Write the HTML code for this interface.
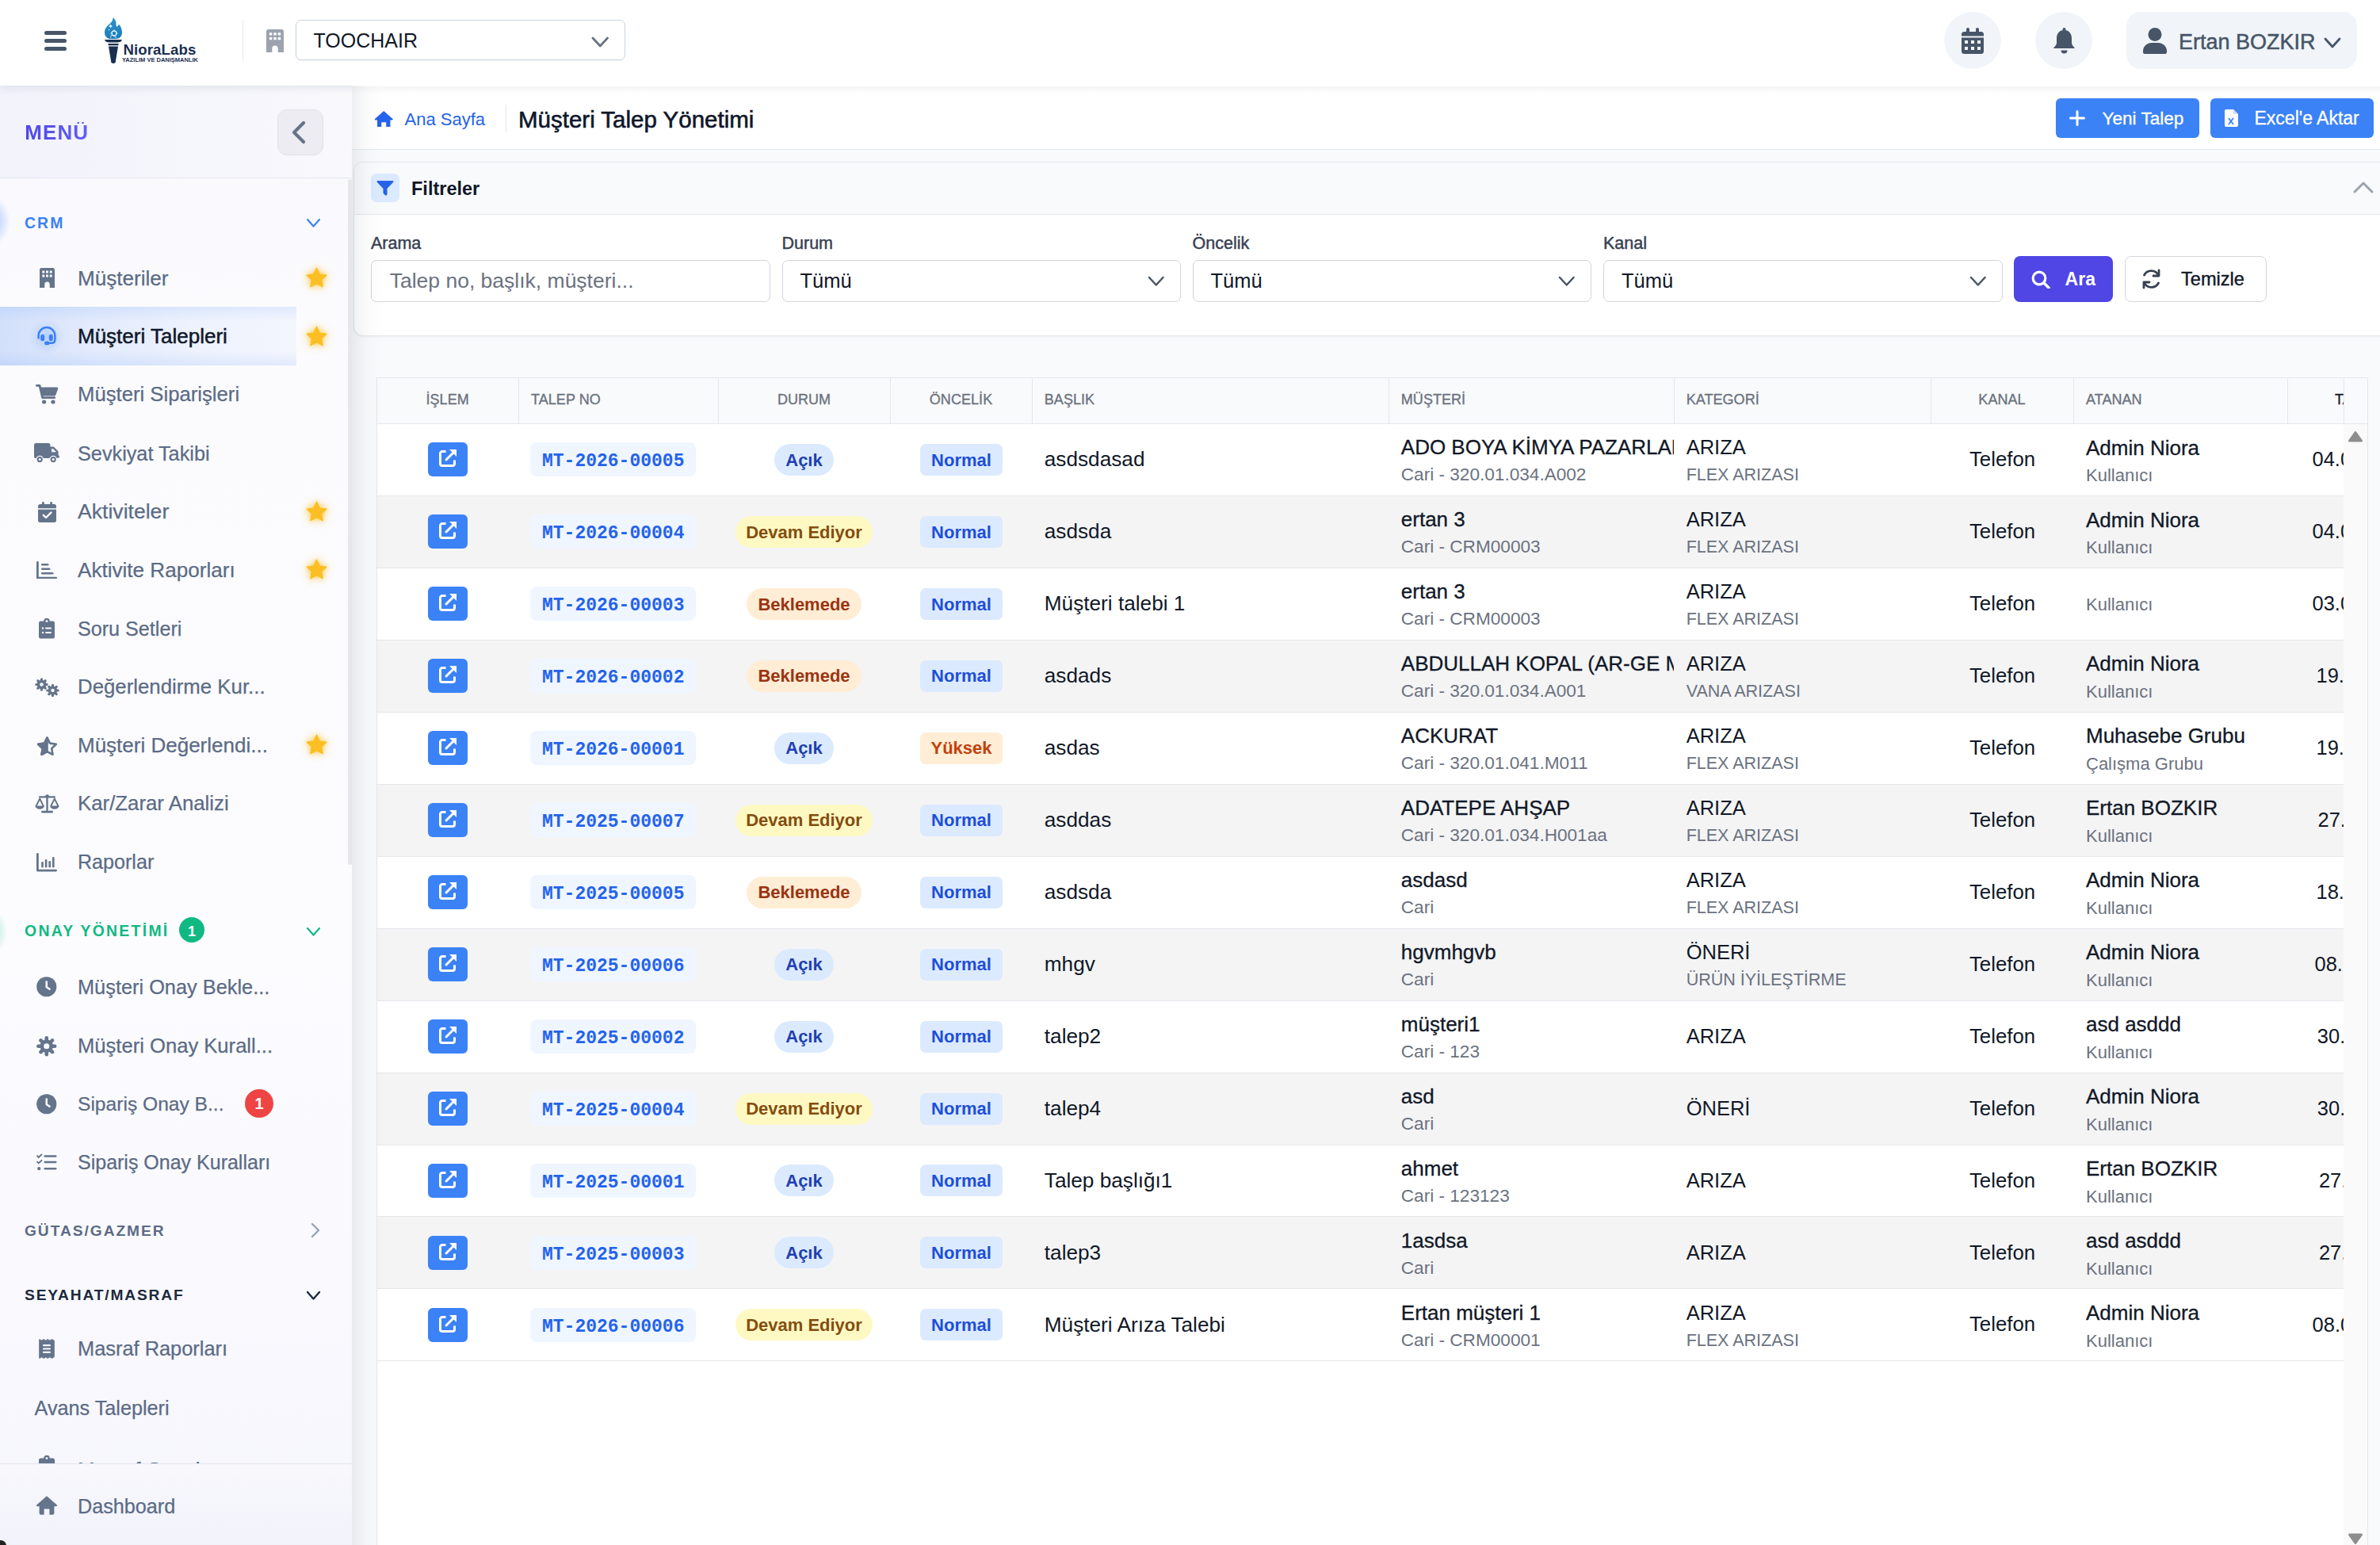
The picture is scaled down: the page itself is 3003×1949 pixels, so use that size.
<!DOCTYPE html><html><head><meta charset="utf-8"><style>
html,body{margin:0;padding:0;}
body{width:3003px;height:1949px;overflow:hidden;position:relative;background:#f8fafc;font-family:'Liberation Sans',sans-serif;}
.a{position:absolute;box-sizing:border-box;}
.t{position:absolute;line-height:1;white-space:nowrap;}
</style></head><body>
<div class="a" style="left:0px;top:108px;width:444px;height:1841px;background:linear-gradient(180deg,#f8f8fd 0%,#fbfbfe 15%,#fcfcff 60%,#f6f6fd 100%);"></div>
<div class="a" style="left:0px;top:108px;width:444px;height:116px;background:linear-gradient(90deg,#f2f2fb 0%,#f5f5fc 50%,#f8f8fd 100%);"></div>
<div class="a" style="left:0px;top:224px;width:444px;height:1px;background:#e6e8f0;"></div>
<div class="t" style="left:31.3px;top:153.9px;font-size:26px;color:#5650e6;font-weight:bold;font-family:'Liberation Sans', sans-serif;letter-spacing:1.1px;background:linear-gradient(90deg,#4f46e5,#6461f0);-webkit-background-clip:text;background-clip:text;color:transparent;">MENÜ</div>
<div class="a" style="left:350px;top:138px;width:58px;height:58px;background:#ececf2;border:1px solid #e1e2ea;border-radius:12px;"></div>
<svg class="a" style="left:366px;top:151px;" width="24" height="32" viewBox="0 0 24 32"><path d="M17 4 L5 16 L17 28" fill="none" stroke="#64748b" stroke-width="4.2" stroke-linecap="round" stroke-linejoin="round"/></svg>
<div class="a" style="left:439px;top:226px;width:5px;height:865px;background:#e5e7eb;border-radius:3px;"></div>
<div class="a" style="left:-16px;top:245px;width:30px;height:68px;background:radial-gradient(ellipse at left center, rgba(90,145,245,0.6), rgba(90,145,245,0) 70%);"></div>
<div class="a" style="left:-14px;top:1145px;width:24px;height:60px;background:radial-gradient(ellipse at left center, rgba(52,200,140,0.45), rgba(52,200,140,0) 70%);"></div>
<div class="t" style="left:31.0px;top:271.5px;font-size:19.4px;color:#3b82f6;font-weight:bold;font-family:'Liberation Sans', sans-serif;letter-spacing:2.1px;">CRM</div>
<svg class="a" style="left:385.5px;top:275px;" width="19" height="12.5" viewBox="-2 -2 19 12.5"><path d="M0 0 L7.5 8.5 L15 0" fill="none" stroke="#3b82f6" stroke-width="2.2" stroke-linecap="round" stroke-linejoin="round"/></svg>
<div class="a" style="left:0px;top:387px;width:374px;height:74px;background:linear-gradient(90deg,#d2e0fb 0%,#e2eafc 30%,#edf2fd 65%,#f4f6fe 100%);"></div>
<div class="a" style="left:0px;top:387px;width:374px;height:74px;background:linear-gradient(180deg,rgba(59,130,246,0.10) 0%,rgba(59,130,246,0) 25%,rgba(59,130,246,0) 75%,rgba(59,130,246,0.10) 100%);"></div>
<svg class="a" style="left:50px;top:338px;" width="19.0" height="25.0" viewBox="0 0 19 25"><path d="M2.5 0h14A2.5 2.5 0 0 1 19 2.5V25h-6.3v-4.2a3.2 3.2 0 0 0-6.4 0V25H0V2.5A2.5 2.5 0 0 1 2.5 0z" fill="#64748b"/><g fill="#f9f9fe"><rect x="3.3" y="3.6" width="3" height="2.8" rx=".5"/><rect x="8" y="3.6" width="3" height="2.8" rx=".5"/><rect x="12.7" y="3.6" width="3" height="2.8" rx=".5"/><rect x="3.3" y="8.6" width="3" height="2.8" rx=".5"/><rect x="8" y="8.6" width="3" height="2.8" rx=".5"/><rect x="12.7" y="8.6" width="3" height="2.8" rx=".5"/></g></svg>
<div class="t" style="left:98.0px;top:337.8px;font-size:26.1px;color:#5b6b85;font-weight:normal;font-family:'Liberation Sans', sans-serif;-webkit-text-stroke:0.25px #5b6b85;">Müşteriler</div>
<svg class="a" style="left:378.5px;top:330.0px;filter:drop-shadow(0 0 3px rgba(251,191,36,0.8)) drop-shadow(0 0 7px rgba(251,191,36,0.4));" width="41" height="41" viewBox="-6 -6 36 36"><path d="M12 1.2l3.3 6.9 7.5 1-5.5 5.2 1.4 7.5L12 18.2l-6.7 3.6 1.4-7.5L1.2 9.1l7.5-1z" fill="#fbbf24" stroke="#fbbf24" stroke-width="1.2" stroke-linejoin="round"/></svg>
<div class="a" style="left:34px;top:400.5px;width:50px;height:48px;background:radial-gradient(circle, rgba(59,130,246,0.22), rgba(59,130,246,0) 65%);"></div>
<svg class="a" style="left:46px;top:411.0px;" width="26.0" height="25.0" viewBox="0 0 26 25"><path d="M2.6 15.5V12.5A10.4 10.4 0 0 1 23.4 12.5V17.5Q23.4 21.8 18.5 21.8H15" fill="none" stroke="#3b82f6" stroke-width="2.5" stroke-linecap="round"/><rect x="5.2" y="10.8" width="5" height="8.4" rx="2.5" fill="#3b82f6"/><rect x="15.8" y="10.8" width="5" height="8.4" rx="2.5" fill="#3b82f6"/><rect x="10" y="19.6" width="6.5" height="4.6" rx="2.3" fill="#3b82f6"/></svg>
<div class="t" style="left:98.0px;top:411.4px;font-size:26px;color:#0f172a;font-weight:normal;font-family:'Liberation Sans', sans-serif;-webkit-text-stroke:0.5px #0f172a;">Müşteri Talepleri</div>
<svg class="a" style="left:378.5px;top:403.5px;filter:drop-shadow(0 0 3px rgba(251,191,36,0.8)) drop-shadow(0 0 7px rgba(251,191,36,0.4));" width="41" height="41" viewBox="-6 -6 36 36"><path d="M12 1.2l3.3 6.9 7.5 1-5.5 5.2 1.4 7.5L12 18.2l-6.7 3.6 1.4-7.5L1.2 9.1l7.5-1z" fill="#fbbf24" stroke="#fbbf24" stroke-width="1.2" stroke-linejoin="round"/></svg>
<svg class="a" style="left:45px;top:485.4px;" width="28.5" height="25.0" viewBox="0 0 28.5 25"><path d="M1.4 1.4H5L8.6 16.6H23.8" fill="none" stroke="#64748b" stroke-width="2.8" stroke-linecap="round" stroke-linejoin="round"/><path d="M6.2 3.6H26.8A1.4 1.4 0 0 1 28.1 5.4L25.3 13.6A1.6 1.6 0 0 1 23.8 14.6H8.4z" fill="#64748b"/><circle cx="10.6" cy="22" r="2.6" fill="#64748b"/><circle cx="22" cy="22" r="2.6" fill="#64748b"/></svg>
<div class="t" style="left:98.0px;top:485.2px;font-size:25.7px;color:#5b6b85;font-weight:normal;font-family:'Liberation Sans', sans-serif;-webkit-text-stroke:0.25px #5b6b85;">Müşteri Siparişleri</div>
<svg class="a" style="left:42.7px;top:559px;" width="32.0" height="25.0" viewBox="0 0 32 25"><rect x="0" y="0" width="20.5" height="19" rx="2.6" fill="#64748b"/><path d="M19.5 4.6H24.6L30.6 10.4V17A2 2 0 0 1 28.6 19H19.5z" fill="#64748b"/><path d="M22 7.2H24L28 11.2H22z" fill="#f9f9fe"/><circle cx="7.2" cy="20.6" r="4.8" fill="#f9f9fe"/><circle cx="24.2" cy="20.6" r="4.8" fill="#f9f9fe"/><circle cx="7.2" cy="20.6" r="3.6" fill="#64748b"/><circle cx="24.2" cy="20.6" r="3.6" fill="#64748b"/><circle cx="7.2" cy="20.6" r="1.5" fill="#f9f9fe"/><circle cx="24.2" cy="20.6" r="1.5" fill="#f9f9fe"/><rect x="29" y="15.5" width="3" height="3" rx="1.2" fill="#64748b"/></svg>
<div class="t" style="left:98.0px;top:559.5px;font-size:25.25px;color:#5b6b85;font-weight:normal;font-family:'Liberation Sans', sans-serif;-webkit-text-stroke:0.25px #5b6b85;">Sevkiyat Takibi</div>
<svg class="a" style="left:48px;top:632.5px;" width="23.0" height="26.0" viewBox="0 0 23 26"><rect x="0" y="3" width="23" height="23" rx="2.8" fill="#64748b"/><rect x="5" y="0" width="2.8" height="6" rx="1.4" fill="#64748b"/><rect x="15.2" y="0" width="2.8" height="6" rx="1.4" fill="#64748b"/><rect x="0" y="8.2" width="23" height="1.5" fill="#f9f9fe"/><path d="M6.8 16.8L10 20L16.4 13.6" fill="none" stroke="#f9f9fe" stroke-width="2.4" stroke-linecap="round" stroke-linejoin="round"/></svg>
<div class="t" style="left:98.0px;top:631.9px;font-size:26.6px;color:#5b6b85;font-weight:normal;font-family:'Liberation Sans', sans-serif;-webkit-text-stroke:0.25px #5b6b85;">Aktiviteler</div>
<svg class="a" style="left:378.5px;top:624.5px;filter:drop-shadow(0 0 3px rgba(251,191,36,0.8)) drop-shadow(0 0 7px rgba(251,191,36,0.4));" width="41" height="41" viewBox="-6 -6 36 36"><path d="M12 1.2l3.3 6.9 7.5 1-5.5 5.2 1.4 7.5L12 18.2l-6.7 3.6 1.4-7.5L1.2 9.1l7.5-1z" fill="#fbbf24" stroke="#fbbf24" stroke-width="1.2" stroke-linejoin="round"/></svg>
<svg class="a" style="left:46px;top:707.7px;" width="26.0" height="22.5" viewBox="0 0 26 22.5"><path d="M1.4 1.4V21.1H24.6" fill="none" stroke="#64748b" stroke-width="2.8" stroke-linecap="round" stroke-linejoin="round"/><rect x="6" y="3" width="9.5" height="2.6" rx="1.3" fill="#64748b"/><rect x="6" y="8.5" width="11.5" height="2.6" rx="1.3" fill="#64748b"/><rect x="6" y="14" width="15.5" height="2.6" rx="1.3" fill="#64748b"/></svg>
<div class="t" style="left:98.0px;top:705.8px;font-size:26.1px;color:#5b6b85;font-weight:normal;font-family:'Liberation Sans', sans-serif;-webkit-text-stroke:0.25px #5b6b85;">Aktivite Raporları</div>
<svg class="a" style="left:378.5px;top:698.0px;filter:drop-shadow(0 0 3px rgba(251,191,36,0.8)) drop-shadow(0 0 7px rgba(251,191,36,0.4));" width="41" height="41" viewBox="-6 -6 36 36"><path d="M12 1.2l3.3 6.9 7.5 1-5.5 5.2 1.4 7.5L12 18.2l-6.7 3.6 1.4-7.5L1.2 9.1l7.5-1z" fill="#fbbf24" stroke="#fbbf24" stroke-width="1.2" stroke-linejoin="round"/></svg>
<svg class="a" style="left:49px;top:780.2px;" width="20.0" height="25.5" viewBox="0 0 20 25.5"><path d="M2.5 3.5H6.2A3.8 3.8 0 0 1 13.8 3.5H17.5A2.5 2.5 0 0 1 20 6V23A2.5 2.5 0 0 1 17.5 25.5H2.5A2.5 2.5 0 0 1 0 23V6A2.5 2.5 0 0 1 2.5 3.5z" fill="#64748b"/><circle cx="10" cy="3.6" r="1.4" fill="#f9f9fe"/><g fill="#f9f9fe"><circle cx="5" cy="12.5" r="1.2"/><rect x="8" y="11.5" width="8" height="2" rx="1"/><circle cx="5" cy="18" r="1.2"/><rect x="8" y="17" width="8" height="2" rx="1"/></g></svg>
<div class="t" style="left:98.0px;top:780.6px;font-size:25.15px;color:#5b6b85;font-weight:normal;font-family:'Liberation Sans', sans-serif;-webkit-text-stroke:0.25px #5b6b85;">Soru Setleri</div>
<svg class="a" style="left:43.6px;top:854.7px;" width="31.0" height="24.0" viewBox="0 0 31 24"><g fill="#64748b"><circle cx="8.5" cy="8.5" r="5.8"/><g stroke="#64748b" stroke-width="3.2" stroke-linecap="round"><path d="M8.5 1.8v13.4M1.8 8.5h13.4M3.8 3.8l9.4 9.4M13.2 3.8l-9.4 9.4"/></g><circle cx="22.5" cy="16" r="5.6"/><g stroke="#64748b" stroke-width="3.1" stroke-linecap="round"><path d="M22.5 9.3v13.4M15.8 16h13.4M17.8 11.3l9.4 9.4M27.2 11.3l-9.4 9.4"/></g></g><circle cx="8.5" cy="8.5" r="2.3" fill="#f9f9fe"/><circle cx="22.5" cy="16" r="2.2" fill="#f9f9fe"/></svg>
<div class="t" style="left:98.0px;top:853.6px;font-size:25.8px;color:#5b6b85;font-weight:normal;font-family:'Liberation Sans', sans-serif;-webkit-text-stroke:0.25px #5b6b85;">Değerlendirme Kur...</div>
<svg class="a" style="left:45.7px;top:929.2px;" width="27.0" height="24.0" viewBox="0 0 27 24"><path d="M13.5 1.6L17 8.6L24.8 9.7L19.2 15.2L20.5 22.9L13.5 19.2L6.5 22.9L7.8 15.2L2.2 9.7L10 8.6z" fill="none" stroke="#64748b" stroke-width="2.6" stroke-linejoin="round"/><path d="M13.5 1.6V19.2L6.5 22.9L7.8 15.2L2.2 9.7L10 8.6z" fill="#64748b" stroke="#64748b" stroke-width="2.6" stroke-linejoin="round"/></svg>
<div class="t" style="left:98.0px;top:926.9px;font-size:26px;color:#5b6b85;font-weight:normal;font-family:'Liberation Sans', sans-serif;-webkit-text-stroke:0.25px #5b6b85;">Müşteri Değerlendi...</div>
<svg class="a" style="left:378.5px;top:919.0px;filter:drop-shadow(0 0 3px rgba(251,191,36,0.8)) drop-shadow(0 0 7px rgba(251,191,36,0.4));" width="41" height="41" viewBox="-6 -6 36 36"><path d="M12 1.2l3.3 6.9 7.5 1-5.5 5.2 1.4 7.5L12 18.2l-6.7 3.6 1.4-7.5L1.2 9.1l7.5-1z" fill="#fbbf24" stroke="#fbbf24" stroke-width="1.2" stroke-linejoin="round"/></svg>
<svg class="a" style="left:43.6px;top:1002.4px;" width="31.0" height="24.0" viewBox="0 0 31 24"><rect x="14.3" y="2.5" width="2.4" height="19" fill="#64748b"/><circle cx="15.5" cy="2.6" r="2.4" fill="#64748b"/><rect x="5" y="2.2" width="21" height="2.4" rx="1.2" fill="#64748b"/><rect x="8" y="20.8" width="15" height="2.6" rx="1.3" fill="#64748b"/><path d="M1.5 15L6.2 5.5L10.9 15" fill="none" stroke="#64748b" stroke-width="1.9" stroke-linejoin="round"/><path d="M0.4 14.6H12A5.8 4.2 0 0 1 0.4 14.6z" fill="#64748b"/><path d="M20.1 15L24.8 5.5L29.5 15" fill="none" stroke="#64748b" stroke-width="1.9" stroke-linejoin="round"/><path d="M19 14.6H30.6A5.8 4.2 0 0 1 19 14.6z" fill="#64748b"/></svg>
<div class="t" style="left:98.0px;top:1001.1px;font-size:25.8px;color:#5b6b85;font-weight:normal;font-family:'Liberation Sans', sans-serif;-webkit-text-stroke:0.25px #5b6b85;">Kar/Zarar Analizi</div>
<svg class="a" style="left:46px;top:1076.3px;" width="26.0" height="23.5" viewBox="0 0 26 23.5"><path d="M1.4 1.4V22.1H24.6" fill="none" stroke="#64748b" stroke-width="2.8" stroke-linecap="round" stroke-linejoin="round"/><rect x="6.2" y="11" width="2.6" height="7.5" rx="1.3" fill="#64748b"/><rect x="10.8" y="8" width="2.6" height="10.5" rx="1.3" fill="#64748b"/><rect x="15.4" y="10" width="2.6" height="8.5" rx="1.3" fill="#64748b"/><rect x="20" y="5" width="2.6" height="13.5" rx="1.3" fill="#64748b"/></svg>
<div class="t" style="left:98.0px;top:1075.2px;font-size:25.1px;color:#5b6b85;font-weight:normal;font-family:'Liberation Sans', sans-serif;-webkit-text-stroke:0.25px #5b6b85;">Raporlar</div>
<div class="t" style="left:31.0px;top:1164.5px;font-size:19.4px;color:#10b981;font-weight:bold;font-family:'Liberation Sans', sans-serif;letter-spacing:2.3px;">ONAY YÖNETİMİ</div>
<div class="a" style="left:226px;top:1157px;width:32px;height:32px;background:#10b981;border-radius:50%;"></div>
<div class="t" style="left:-758.0px;width:2000px;text-align:center;top:1165.7px;font-size:18px;color:#fff;font-weight:bold;font-family:'Liberation Sans', sans-serif;">1</div>
<svg class="a" style="left:385.5px;top:1169px;" width="19" height="12.5" viewBox="-2 -2 19 12.5"><path d="M0 0 L7.5 8.5 L15 0" fill="none" stroke="#10b981" stroke-width="2.2" stroke-linecap="round" stroke-linejoin="round"/></svg>
<svg class="a" style="left:46px;top:1232.2px;" width="25.5" height="25.5" viewBox="0 0 25.5 25.5"><circle cx="12.75" cy="12.75" r="12.6" fill="#64748b"/><path d="M12.75 6.5V13.2L16.6 15.8" fill="none" stroke="#f9f9fe" stroke-width="2.5" stroke-linecap="round" stroke-linejoin="round"/></svg>
<div class="t" style="left:98.0px;top:1232.5px;font-size:25.35px;color:#5b6b85;font-weight:normal;font-family:'Liberation Sans', sans-serif;-webkit-text-stroke:0.25px #5b6b85;">Müşteri Onay Bekle...</div>
<svg class="a" style="left:46px;top:1307.2px;" width="25.5" height="25.5" viewBox="0 0 25.5 25.5"><g fill="#64748b"><circle cx="12.75" cy="12.75" r="8.2"/><g stroke="#64748b" stroke-width="4.6" stroke-linecap="round"><path d="M12.75 2.3v20.9M2.3 12.75h20.9M5.4 5.4l14.7 14.7M20.1 5.4L5.4 20.1"/></g></g><circle cx="12.75" cy="12.75" r="3.6" fill="#f9f9fe"/></svg>
<div class="t" style="left:98.0px;top:1307.2px;font-size:25.6px;color:#5b6b85;font-weight:normal;font-family:'Liberation Sans', sans-serif;-webkit-text-stroke:0.25px #5b6b85;">Müşteri Onay Kurall...</div>
<svg class="a" style="left:46px;top:1380.2px;" width="25.5" height="25.5" viewBox="0 0 25.5 25.5"><circle cx="12.75" cy="12.75" r="12.6" fill="#64748b"/><path d="M12.75 6.5V13.2L16.6 15.8" fill="none" stroke="#f9f9fe" stroke-width="2.5" stroke-linecap="round" stroke-linejoin="round"/></svg>
<div class="t" style="left:98.0px;top:1381.1px;font-size:24.6px;color:#5b6b85;font-weight:normal;font-family:'Liberation Sans', sans-serif;-webkit-text-stroke:0.25px #5b6b85;">Sipariş Onay B...</div>
<svg class="a" style="left:46px;top:1454.5px;" width="25.5" height="22.0" viewBox="0 0 25.5 22"><path d="M1 3.2L2.8 5L6.4 1.4M1 10.6L2.8 12.4L6.4 8.8" fill="none" stroke="#64748b" stroke-width="1.9" stroke-linecap="round" stroke-linejoin="round"/><circle cx="3.2" cy="19.2" r="2.1" fill="#64748b"/><rect x="9.5" y="2.2" width="16" height="2.6" rx="1.2" fill="#64748b"/><rect x="9.5" y="9.7" width="16" height="2.6" rx="1.2" fill="#64748b"/><rect x="9.5" y="17.9" width="16" height="2.6" rx="1.2" fill="#64748b"/></svg>
<div class="t" style="left:98.0px;top:1453.8px;font-size:25.0px;color:#5b6b85;font-weight:normal;font-family:'Liberation Sans', sans-serif;-webkit-text-stroke:0.25px #5b6b85;">Sipariş Onay Kuralları</div>
<div class="a" style="left:309px;top:1374px;width:36px;height:36px;background:#ef4444;border-radius:50%;"></div>
<div class="t" style="left:-673.0px;width:2000px;text-align:center;top:1382.0px;font-size:20px;color:#fff;font-weight:bold;font-family:'Liberation Sans', sans-serif;">1</div>
<div class="t" style="left:31.0px;top:1542.7px;font-size:19.2px;color:#5b6b85;font-weight:bold;font-family:'Liberation Sans', sans-serif;letter-spacing:1.95px;">GÜTAS/GAZMER</div>
<svg class="a" style="left:390px;top:1541px;" width="16" height="22" viewBox="0 0 16 22"><path d="M4 3 L12 11 L4 19" fill="none" stroke="#94a3b8" stroke-width="2.4" stroke-linecap="round" stroke-linejoin="round"/></svg>
<div class="t" style="left:31.0px;top:1623.7px;font-size:19.2px;color:#1e293b;font-weight:bold;font-family:'Liberation Sans', sans-serif;letter-spacing:1.83px;">SEYAHAT/MASRAF</div>
<svg class="a" style="left:385.5px;top:1628px;" width="19" height="12.5" viewBox="-2 -2 19 12.5"><path d="M0 0 L7.5 8.5 L15 0" fill="none" stroke="#1e293b" stroke-width="2.4" stroke-linecap="round" stroke-linejoin="round"/></svg>
<svg class="a" style="left:49px;top:1689px;" width="20.0" height="25.0" viewBox="0 0 20 25"><path d="M0.8 0.8L3.5 2.6L6.2 0.8L8.9 2.6L11.1 0.8L13.8 2.6L16.5 0.8L19.2 2.6V22.4L16.5 24.2L13.8 22.4L11.1 24.2L8.9 22.4L6.2 24.2L3.5 22.4L0.8 24.2z" fill="#64748b" stroke="#64748b" stroke-width="1.2" stroke-linejoin="round"/><g fill="#f9f9fe"><rect x="5" y="7" width="10" height="2.2" rx="1"/><rect x="5" y="11.4" width="10" height="2.2" rx="1"/><rect x="5" y="15.8" width="10" height="2.2" rx="1"/></g></svg>
<div class="t" style="left:98.0px;top:1689.4px;font-size:25.4px;color:#5b6b85;font-weight:normal;font-family:'Liberation Sans', sans-serif;-webkit-text-stroke:0.25px #5b6b85;">Masraf Raporları</div>
<div class="t" style="left:43.6px;top:1763.6px;font-size:25.2px;color:#5b6b85;font-weight:normal;font-family:'Liberation Sans', sans-serif;-webkit-text-stroke:0.25px #5b6b85;">Avans Talepleri</div>
<div class="a" style="left:0;top:1800px;width:444px;height:46px;overflow:hidden;">
<svg class="a" style="left:49px;top:36px;" width="20.0" height="25.5" viewBox="0 0 20 25.5"><path d="M2.5 3.5H6.2A3.8 3.8 0 0 1 13.8 3.5H17.5A2.5 2.5 0 0 1 20 6V23A2.5 2.5 0 0 1 17.5 25.5H2.5A2.5 2.5 0 0 1 0 23V6A2.5 2.5 0 0 1 2.5 3.5z" fill="#64748b"/><circle cx="10" cy="3.6" r="1.4" fill="#f9f9fe"/></svg>
<div class="t" style="left:98.0px;top:40.9px;font-size:26px;color:#5b6b85;font-weight:normal;font-family:'Liberation Sans', sans-serif;-webkit-text-stroke:0.25px #5b6b85;">Masraf Onayları</div>
</div>
<div class="a" style="left:0px;top:1846px;width:444px;height:1px;background:#e2e4ee;"></div>
<div class="a" style="left:0px;top:1847px;width:444px;height:102px;background:linear-gradient(180deg,#f8f8fd,#f2f2fb);"></div>
<svg class="a" style="left:45px;top:1886px;" width="28.0" height="25.0" viewBox="0 0 28 25"><path d="M14 1.2L1.4 12.2A1.1 1.1 0 0 0 2.2 14.2H4.6V23A1.8 1.8 0 0 0 6.4 24.8H10.6V17.5H17.4V24.8H21.6A1.8 1.8 0 0 0 23.4 23V14.2H25.8A1.1 1.1 0 0 0 26.6 12.2z" fill="#64748b"/></svg>
<div class="t" style="left:98.0px;top:1887.6px;font-size:25.2px;color:#5b6b85;font-weight:normal;font-family:'Liberation Sans', sans-serif;-webkit-text-stroke:0.25px #5b6b85;">Dashboard</div>
<div class="a" style="left:0px;top:0px;width:3003px;height:109px;background:#fff;border-bottom:1px solid #e5e7eb;box-shadow:0 3px 10px rgba(15,23,42,0.07);"></div>
<div class="a" style="left:56px;top:39px;width:28px;height:4.5px;background:#475569;border-radius:2.5px;"></div>
<div class="a" style="left:56px;top:49px;width:28px;height:4.5px;background:#475569;border-radius:2.5px;"></div>
<div class="a" style="left:56px;top:59px;width:28px;height:4.5px;background:#475569;border-radius:2.5px;"></div>
<svg class="a" style="left:128px;top:20px;" width="30" height="62" viewBox="0 0 30 62"><defs><linearGradient id="fl" x1="0" y1="0" x2="0" y2="1"><stop offset="0" stop-color="#2a93cc"/><stop offset="1" stop-color="#1b7db8"/></linearGradient></defs><path d="M14.6 2 C17 4 19 7 18.5 11 C18.3 13 19.3 14 20.5 13 C21.3 12.2 21.8 11.5 22 10.5 C24.5 13 26 17 26 21 C26 25.5 23 29 18 29 H10 C6.5 28 4 25 4 21 C4 15.5 8 12 11.5 9 C13.5 7 14.5 5 14.6 2 Z" fill="url(#fl)"/><path d="M11.5 10.5 l1 1.5 1.5 1 -1.5 1 -1 1.5 -1 -1.5 -1.5 -1 1.5 -1z" fill="#e0f2fe"/><circle cx="9.5" cy="17.5" r="0.8" fill="#e0f2fe"/><circle cx="16" cy="22" r="3" fill="none" stroke="#e0f2fe" stroke-width="1.3"/><path d="M16 17.5v2M16 24.5v2M11.5 22h2M18.5 22h2M12 28v-3h2.5M18 28v-2" stroke="#e0f2fe" stroke-width="1"/><path d="M4 30 H26 Q25 33.5 20 33.5 H10 Q5 33.5 4 30 Z" fill="#17304f"/><rect x="8.5" y="35" width="13" height="2.2" rx="0.5" fill="#17304f"/><path d="M9 38.6 H21 L17.6 59 Q15 61 12.4 59 Z" fill="#17304f"/></svg>
<div class="t" style="left:155.5px;top:54.2px;font-size:18.6px;color:#1b2f4f;font-weight:bold;font-family:'Liberation Sans', sans-serif;letter-spacing:0.1px;">NioraLabs</div>
<div class="t" style="left:154.0px;top:72.1px;font-size:7.5px;color:#1b2f4f;font-weight:bold;font-family:'Liberation Sans', sans-serif;">YAZILIM VE DANIŞMANLIK</div>
<div class="a" style="left:305.5px;top:25px;width:1.2px;height:52px;background:#e5e7eb;"></div>
<svg class="a" style="left:336px;top:37px;" width="22.04" height="28.999999999999996" viewBox="0 0 19 25"><path d="M2.5 0h14A2.5 2.5 0 0 1 19 2.5V25h-6.3v-4.2a3.2 3.2 0 0 0-6.4 0V25H0V2.5A2.5 2.5 0 0 1 2.5 0z" fill="#9ca3af"/><g fill="#ffffff"><rect x="3.3" y="3.6" width="3" height="2.8" rx=".5"/><rect x="8" y="3.6" width="3" height="2.8" rx=".5"/><rect x="12.7" y="3.6" width="3" height="2.8" rx=".5"/><rect x="3.3" y="8.6" width="3" height="2.8" rx=".5"/><rect x="8" y="8.6" width="3" height="2.8" rx=".5"/><rect x="12.7" y="8.6" width="3" height="2.8" rx=".5"/></g></svg>
<div class="a" style="left:372.6px;top:25.3px;width:416px;height:51px;background:#fff;border:1.3px solid #cbd5e1;border-radius:7px;box-shadow:0 1px 2px rgba(0,0,0,0.05);"></div>
<div class="t" style="left:395.5px;top:38.8px;font-size:25px;color:#111827;font-weight:normal;font-family:'Liberation Sans', sans-serif;">TOOCHAIR</div>
<svg class="a" style="left:746px;top:46px;" width="22.5" height="14" viewBox="-2 -2 22.5 14"><path d="M0 0 L9.25 10 L18.5 0" fill="none" stroke="#6b7280" stroke-width="2.8" stroke-linecap="round" stroke-linejoin="round"/></svg>
<div class="a" style="left:2453px;top:15px;width:72px;height:72px;background:#f1f5f9;border-radius:50%;"></div>
<svg class="a" style="left:2475px;top:35px;" width="28" height="33" viewBox="0 0 28 33"><rect x="0" y="5" width="28" height="28" rx="3.5" fill="#475569"/><rect x="6" y="0" width="4" height="8" rx="2" fill="#475569"/><rect x="18" y="0" width="4" height="8" rx="2" fill="#475569"/><rect x="0" y="10.5" width="28" height="2" fill="#f1f5f9"/><g fill="#f1f5f9"><rect x="4" y="16" width="4" height="4"/><rect x="12" y="16" width="4" height="4"/><rect x="20" y="16" width="4" height="4"/><rect x="4" y="24" width="4" height="4"/><rect x="12" y="24" width="4" height="4"/><rect x="20" y="24" width="4" height="4"/></g></svg>
<div class="a" style="left:2568px;top:15px;width:72px;height:72px;background:#f1f5f9;border-radius:50%;"></div>
<svg class="a" style="left:2590px;top:35px;" width="29" height="33" viewBox="0 0 29 33"><rect x="12.5" y="0" width="4" height="5" rx="2" fill="#475569"/><path d="M14.5 3 C8 3 5 8 5 13 V19 C5 22 2 24 1 26 H28 C27 24 24 22 24 19 V13 C24 8 21 3 14.5 3z" fill="#475569"/><path d="M10.5 28.5 H18.5 A4 4 0 0 1 10.5 28.5z" fill="#475569"/></svg>
<div class="a" style="left:2683px;top:15px;width:291px;height:72px;background:#f1f5f9;border-radius:18px;"></div>
<svg class="a" style="left:2704px;top:35px;" width="30" height="33" viewBox="0 0 30 33"><circle cx="15" cy="8.5" r="8.5" fill="#475569"/><path d="M2 33 A2 2 0 0 1 0 31 V29.5 C0 23.5 5 19 11 19 H19 C25 19 30 23.5 30 29.5 V31 A2 2 0 0 1 28 33z" fill="#475569"/></svg>
<div class="t" style="left:2749.0px;top:40.0px;font-size:27px;color:#475569;font-weight:normal;font-family:'Liberation Sans', sans-serif;-webkit-text-stroke:0.5px #475569;">Ertan BOZKIR</div>
<svg class="a" style="left:2932px;top:47px;" width="22" height="14" viewBox="-2 -2 22 14"><path d="M0 0 L9.0 10 L18 0" fill="none" stroke="#475569" stroke-width="2.8" stroke-linecap="round" stroke-linejoin="round"/></svg>
<div class="a" style="left:444px;top:108px;width:2559px;height:81px;background:#fff;border-bottom:1px solid #e5e7eb;"></div>
<svg class="a" style="left:472px;top:138.5px;" width="24.5" height="21.875" viewBox="0 0 28 25"><path d="M14 1.2L1.4 12.2A1.1 1.1 0 0 0 2.2 14.2H4.6V23A1.8 1.8 0 0 0 6.4 24.8H10.6V17.5H17.4V24.8H21.6A1.8 1.8 0 0 0 23.4 23V14.2H25.8A1.1 1.1 0 0 0 26.6 12.2z" fill="#2563eb"/></svg>
<div class="t" style="left:510.6px;top:139.8px;font-size:22px;color:#2563eb;font-weight:normal;font-family:'Liberation Sans', sans-serif;">Ana Sayfa</div>
<div class="a" style="left:638px;top:131.5px;width:1.3px;height:35px;background:#e5e7eb;"></div>
<div class="t" style="left:654.0px;top:135.9px;font-size:29.5px;color:#0f172a;font-weight:normal;font-family:'Liberation Sans', sans-serif;-webkit-text-stroke:0.6px #0f172a;">Müşteri Talep Yönetimi</div>
<div class="a" style="left:2594px;top:124px;width:181px;height:50px;background:#3b82f6;border-radius:6px;"></div>
<svg class="a" style="left:2611px;top:139px;" width="20" height="20" viewBox="0 0 20 20"><path d="M10 1.5V18.5M1.5 10H18.5" stroke="#fff" stroke-width="3" stroke-linecap="round"/></svg>
<div class="t" style="left:2652.4px;top:138.8px;font-size:22.6px;color:#fff;font-weight:normal;font-family:'Liberation Sans', sans-serif;-webkit-text-stroke:0.3px #fff;">Yeni Talep</div>
<div class="a" style="left:2789px;top:124px;width:206px;height:50px;background:#3b82f6;border-radius:6px;"></div>
<svg class="a" style="left:2807px;top:138px;" width="17" height="22" viewBox="0 0 17 22"><path d="M2 0 H11 L17 6 V20 A2 2 0 0 1 15 22 H2 A2 2 0 0 1 0 20 V2 A2 2 0 0 1 2 0z" fill="#fff"/><path d="M11 0 V6 H17" fill="#cfe0fd"/><path d="M5 11 L11 19 M11 11 L5 19" stroke="#3b82f6" stroke-width="1.8"/></svg>
<div class="t" style="left:2844.5px;top:138.4px;font-size:23px;color:#fff;font-weight:normal;font-family:'Liberation Sans', sans-serif;-webkit-text-stroke:0.3px #fff;">Excel&#x27;e Aktar</div>
<div class="a" style="left:445.5px;top:204px;width:2600px;height:220px;background:#fff;border:1px solid #e5e7eb;border-radius:12px;box-shadow:0 1px 3px rgba(15,23,42,0.06);overflow:hidden;"></div>
<div class="a" style="left:446.5px;top:205px;width:2600px;height:66px;background:#f8fafc;border-bottom:1px solid #e5e7eb;border-top-left-radius:11px;"></div>
<div class="a" style="left:468px;top:219px;width:36px;height:36px;background:#dbeafe;border-radius:7px;"></div>
<svg class="a" style="left:475px;top:226.5px;" width="22" height="20" viewBox="0 0 22 20"><path d="M1.5 1 H20.5 A1 1 0 0 1 21.2 2.7 L13.5 11 V18 A1.5 1.5 0 0 1 11 19.2 L9.3 17.6 A1.5 1.5 0 0 1 8.5 16.5 V11 L0.8 2.7 A1 1 0 0 1 1.5 1z" fill="#2563eb"/></svg>
<div class="t" style="left:519.0px;top:227.0px;font-size:23.5px;color:#111827;font-weight:bold;font-family:'Liberation Sans', sans-serif;">Filtreler</div>
<svg class="a" style="left:2968px;top:226px;" width="28" height="20" viewBox="0 0 28 20"><path d="M3 16 L14 5 L25 16" fill="none" stroke="#9ca3af" stroke-width="3" stroke-linecap="round" stroke-linejoin="round"/></svg>
<div class="t" style="left:468.0px;top:296.5px;font-size:21.5px;color:#374151;font-weight:normal;font-family:'Liberation Sans', sans-serif;-webkit-text-stroke:0.45px #374151;">Arama</div>
<div class="t" style="left:986.5px;top:296.5px;font-size:21.5px;color:#374151;font-weight:normal;font-family:'Liberation Sans', sans-serif;-webkit-text-stroke:0.45px #374151;">Durum</div>
<div class="t" style="left:1504.5px;top:296.5px;font-size:21.5px;color:#374151;font-weight:normal;font-family:'Liberation Sans', sans-serif;-webkit-text-stroke:0.45px #374151;">Öncelik</div>
<div class="t" style="left:2023.0px;top:296.5px;font-size:21.5px;color:#374151;font-weight:normal;font-family:'Liberation Sans', sans-serif;-webkit-text-stroke:0.45px #374151;">Kanal</div>
<div class="a" style="left:468px;top:328px;width:503.5px;height:52.5px;background:#fff;border:1.3px solid #d1d5db;border-radius:7px;"></div>
<div class="t" style="left:491.7px;top:340.9px;font-size:26.5px;color:#6b7280;font-weight:normal;font-family:'Liberation Sans', sans-serif;">Talep no, başlık, müşteri...</div>
<div class="a" style="left:986.5px;top:328px;width:503.5px;height:52.5px;background:#fff;border:1.3px solid #d1d5db;border-radius:7px;"></div>
<div class="t" style="left:1009.5px;top:341.7px;font-size:25.5px;color:#111827;font-weight:normal;font-family:'Liberation Sans', sans-serif;">Tümü</div>
<svg class="a" style="left:1448.0px;top:347.5px;" width="21.5" height="13.5" viewBox="-2 -2 21.5 13.5"><path d="M0 0 L8.75 9.5 L17.5 0" fill="none" stroke="#4b5563" stroke-width="2.5" stroke-linecap="round" stroke-linejoin="round"/></svg>
<div class="a" style="left:1504.5px;top:328px;width:503.5px;height:52.5px;background:#fff;border:1.3px solid #d1d5db;border-radius:7px;"></div>
<div class="t" style="left:1527.5px;top:341.7px;font-size:25.5px;color:#111827;font-weight:normal;font-family:'Liberation Sans', sans-serif;">Tümü</div>
<svg class="a" style="left:1966.0px;top:347.5px;" width="21.5" height="13.5" viewBox="-2 -2 21.5 13.5"><path d="M0 0 L8.75 9.5 L17.5 0" fill="none" stroke="#4b5563" stroke-width="2.5" stroke-linecap="round" stroke-linejoin="round"/></svg>
<div class="a" style="left:2023px;top:328px;width:503.5px;height:52.5px;background:#fff;border:1.3px solid #d1d5db;border-radius:7px;"></div>
<div class="t" style="left:2046.0px;top:341.7px;font-size:25.5px;color:#111827;font-weight:normal;font-family:'Liberation Sans', sans-serif;">Tümü</div>
<svg class="a" style="left:2484.5px;top:347.5px;" width="21.5" height="13.5" viewBox="-2 -2 21.5 13.5"><path d="M0 0 L8.75 9.5 L17.5 0" fill="none" stroke="#4b5563" stroke-width="2.5" stroke-linecap="round" stroke-linejoin="round"/></svg>
<div class="a" style="left:2541px;top:323px;width:125px;height:57.5px;background:#4f46e5;border-radius:8px;"></div>
<svg class="a" style="left:2563px;top:341px;" width="27" height="23" viewBox="0 0 27 23"><circle cx="10" cy="10" r="7.8" fill="none" stroke="#fff" stroke-width="3.2"/><path d="M16 16 L22 22" stroke="#fff" stroke-width="3.4" stroke-linecap="round"/></svg>
<div class="t" style="left:2605.6px;top:341.4px;font-size:23px;color:#fff;font-weight:bold;font-family:'Liberation Sans', sans-serif;">Ara</div>
<div class="a" style="left:2681.4px;top:323px;width:178.5px;height:57.5px;background:#fff;border:1.3px solid #d1d5db;border-radius:8px;"></div>
<svg class="a" style="left:2701px;top:339px;" width="28" height="26" viewBox="0 0 28 26"><path d="M22.5 8.5 A10 10 0 0 0 4.5 8" fill="none" stroke="#374151" stroke-width="2.8" stroke-linecap="round"/><path d="M4.5 17.5 A10 10 0 0 0 22.5 18" fill="none" stroke="#374151" stroke-width="2.8" stroke-linecap="round"/><path d="M23 2 V9 H16" fill="none" stroke="#374151" stroke-width="2.8" stroke-linecap="round" stroke-linejoin="round"/><path d="M4 24 V17 H11" fill="none" stroke="#374151" stroke-width="2.8" stroke-linecap="round" stroke-linejoin="round"/></svg>
<div class="t" style="left:2752.0px;top:340.9px;font-size:23.6px;color:#111827;font-weight:normal;font-family:'Liberation Sans', sans-serif;-webkit-text-stroke:0.4px #111827;">Temizle</div>
<div class="a" style="left:475px;top:475.5px;width:2513px;height:1473.5px;background:#fff;border:1px solid #e5e7eb;border-bottom:none;"></div>
<div class="a" style="left:476px;top:476.5px;width:2511px;height:58px;background:#f9fafb;border-bottom:1px solid #e5e7eb;"></div>
<div class="a" style="left:654.4px;top:476.5px;width:1px;height:58px;background:#e5e7eb;"></div>
<div class="a" style="left:906.3px;top:476.5px;width:1px;height:58px;background:#e5e7eb;"></div>
<div class="a" style="left:1122.7px;top:476.5px;width:1px;height:58px;background:#e5e7eb;"></div>
<div class="a" style="left:1302.3px;top:476.5px;width:1px;height:58px;background:#e5e7eb;"></div>
<div class="a" style="left:1752.3px;top:476.5px;width:1px;height:58px;background:#e5e7eb;"></div>
<div class="a" style="left:2112.4px;top:476.5px;width:1px;height:58px;background:#e5e7eb;"></div>
<div class="a" style="left:2436px;top:476.5px;width:1px;height:58px;background:#e5e7eb;"></div>
<div class="a" style="left:2616px;top:476.5px;width:1px;height:58px;background:#e5e7eb;"></div>
<div class="a" style="left:2886px;top:476.5px;width:1px;height:58px;background:#e5e7eb;"></div>
<div class="a" style="left:2957.4px;top:476.5px;width:1px;height:58px;background:#e5e7eb;"></div>
<div class="t" style="left:-435.4px;width:2000px;text-align:center;top:495.2px;font-size:18px;color:#6b7280;font-weight:normal;font-family:'Liberation Sans', sans-serif;-webkit-text-stroke:0.35px #6b7280;letter-spacing:0.05px;">İŞLEM</div>
<div class="t" style="left:670.0px;top:495.2px;font-size:18px;color:#6b7280;font-weight:normal;font-family:'Liberation Sans', sans-serif;-webkit-text-stroke:0.35px #6b7280;letter-spacing:0.05px;">TALEP NO</div>
<div class="t" style="left:14.5px;width:2000px;text-align:center;top:495.2px;font-size:18px;color:#6b7280;font-weight:normal;font-family:'Liberation Sans', sans-serif;-webkit-text-stroke:0.35px #6b7280;letter-spacing:0.05px;">DURUM</div>
<div class="t" style="left:212.5px;width:2000px;text-align:center;top:495.2px;font-size:18px;color:#6b7280;font-weight:normal;font-family:'Liberation Sans', sans-serif;-webkit-text-stroke:0.35px #6b7280;letter-spacing:0.05px;">ÖNCELİK</div>
<div class="t" style="left:1317.8px;top:495.2px;font-size:18px;color:#6b7280;font-weight:normal;font-family:'Liberation Sans', sans-serif;-webkit-text-stroke:0.35px #6b7280;letter-spacing:0.05px;">BAŞLIK</div>
<div class="t" style="left:1767.8px;top:495.2px;font-size:18px;color:#6b7280;font-weight:normal;font-family:'Liberation Sans', sans-serif;-webkit-text-stroke:0.35px #6b7280;letter-spacing:0.05px;">MÜŞTERİ</div>
<div class="t" style="left:2127.7px;top:495.2px;font-size:18px;color:#6b7280;font-weight:normal;font-family:'Liberation Sans', sans-serif;-webkit-text-stroke:0.35px #6b7280;letter-spacing:0.05px;">KATEGORİ</div>
<div class="t" style="left:1526.0px;width:2000px;text-align:center;top:495.2px;font-size:18px;color:#6b7280;font-weight:normal;font-family:'Liberation Sans', sans-serif;-webkit-text-stroke:0.35px #6b7280;letter-spacing:0.05px;">KANAL</div>
<div class="t" style="left:2632.0px;top:495.2px;font-size:18px;color:#6b7280;font-weight:normal;font-family:'Liberation Sans', sans-serif;-webkit-text-stroke:0.35px #6b7280;letter-spacing:0.05px;">ATANAN</div>
<div class="a" style="left:2886px;top:476px;width:71px;height:58px;overflow:hidden;">
<div class="t" style="left:60.0px;top:19.2px;font-size:18px;color:#111827;font-weight:normal;font-family:'Liberation Sans', sans-serif;-webkit-text-stroke:0.3px #111827;">TARİH</div>
</div>
<div class="a" style="left:540px;top:558.19px;width:50px;height:43px;background:#3b82f6;border-radius:6px;"></div>
<svg class="a" style="left:553px;top:565.49px;" width="25" height="25" viewBox="0 0 25 25"><path d="M9.5 4.5 H5 A2.5 2.5 0 0 0 2.5 7 V20 A2.5 2.5 0 0 0 5 22.5 H18 A2.5 2.5 0 0 0 20.5 20 V15.5" fill="none" stroke="#fff" stroke-width="3"/><path d="M10 15 L21 4" stroke="#fff" stroke-width="3" stroke-linecap="round"/><path d="M14 2 H23 V11 z" fill="#fff"/></svg>
<div class="a" style="left:669px;top:558.19px;width:209px;height:43px;background:#eff6ff;border-radius:8px;"></div>
<div class="t" style="left:684.0px;top:570.9px;font-size:23px;color:#2563eb;font-weight:bold;font-family:'Liberation Mono', monospace;">MT-2026-00005</div>
<div class="a" style="left:977.0px;top:559.69px;width:75px;height:40px;background:#dbeafe;border-radius:20px;"></div>
<div class="t" style="left:14.5px;width:2000px;text-align:center;top:569.5px;font-size:22px;color:#1e40af;font-weight:bold;font-family:'Liberation Sans', sans-serif;">Açık</div>
<div class="a" style="left:1161px;top:559.69px;width:104px;height:40px;background:#dbeafe;border-radius:7px;"></div>
<div class="t" style="left:213.0px;width:2000px;text-align:center;top:569.5px;font-size:22px;color:#1d4ed8;font-weight:bold;font-family:'Liberation Sans', sans-serif;">Normal</div>
<div class="t" style="left:1317.8px;top:566.3px;font-size:26.2px;color:#111827;font-weight:normal;font-family:'Liberation Sans', sans-serif;">asdsdasad</div>
<div class="a" style="left:1752.3px;top:534.2px;width:360.1px;height:91.0px;overflow:hidden;">
<div class="t" style="left:15.5px;top:16.9px;font-size:26px;color:#111827;font-weight:normal;font-family:'Liberation Sans', sans-serif;-webkit-text-stroke:0.3px #111827;">ADO BOYA KİMYA PAZARLAMA</div>
<div class="t" style="left:15.5px;top:53.8px;font-size:22.6px;color:#6b7280;font-weight:normal;font-family:'Liberation Sans', sans-serif;">Cari - 320.01.034.A002</div>
</div>
<div class="t" style="left:2127.7px;top:551.9px;font-size:25.5px;color:#111827;font-weight:normal;font-family:'Liberation Sans', sans-serif;">ARIZA</div>
<div class="t" style="left:2127.7px;top:589.3px;font-size:21.5px;color:#6b7280;font-weight:normal;font-family:'Liberation Sans', sans-serif;">FLEX ARIZASI</div>
<div class="t" style="left:1526.5px;width:2000px;text-align:center;top:566.7px;font-size:25.8px;color:#111827;font-weight:normal;font-family:'Liberation Sans', sans-serif;">Telefon</div>
<div class="t" style="left:2632.0px;top:551.5px;font-size:26px;color:#111827;font-weight:normal;font-family:'Liberation Sans', sans-serif;-webkit-text-stroke:0.3px #111827;">Admin Niora</div>
<div class="t" style="left:2632.0px;top:588.9px;font-size:22px;color:#6b7280;font-weight:normal;font-family:'Liberation Sans', sans-serif;">Kullanıcı</div>
<div class="a" style="left:2886px;top:534.2px;width:71.4px;height:91.0px;overflow:hidden;">
<div class="t" style="left:31.5px;top:32.7px;font-size:25.5px;color:#111827;font-weight:normal;font-family:'Liberation Sans', sans-serif;">04.01.2026</div>
</div>
<div class="a" style="left:476px;top:625.1800000000001px;width:2481.4px;height:90.98px;background:#f4f4f5;"></div>
<div class="a" style="left:476px;top:624.6800000000001px;width:2481.4px;height:1px;background:#e5e7eb;"></div>
<div class="a" style="left:540px;top:649.1700000000001px;width:50px;height:43px;background:#3b82f6;border-radius:6px;"></div>
<svg class="a" style="left:553px;top:656.47px;" width="25" height="25" viewBox="0 0 25 25"><path d="M9.5 4.5 H5 A2.5 2.5 0 0 0 2.5 7 V20 A2.5 2.5 0 0 0 5 22.5 H18 A2.5 2.5 0 0 0 20.5 20 V15.5" fill="none" stroke="#fff" stroke-width="3"/><path d="M10 15 L21 4" stroke="#fff" stroke-width="3" stroke-linecap="round"/><path d="M14 2 H23 V11 z" fill="#fff"/></svg>
<div class="a" style="left:669px;top:649.1700000000001px;width:209px;height:43px;background:#eff6ff;border-radius:8px;"></div>
<div class="t" style="left:684.0px;top:661.8px;font-size:23px;color:#2563eb;font-weight:bold;font-family:'Liberation Mono', monospace;">MT-2026-00004</div>
<div class="a" style="left:928.0px;top:650.6700000000001px;width:173px;height:40px;background:#fef9c3;border-radius:20px;"></div>
<div class="t" style="left:14.5px;width:2000px;text-align:center;top:660.5px;font-size:22px;color:#854d0e;font-weight:bold;font-family:'Liberation Sans', sans-serif;">Devam Ediyor</div>
<div class="a" style="left:1161px;top:650.6700000000001px;width:104px;height:40px;background:#dbeafe;border-radius:7px;"></div>
<div class="t" style="left:213.0px;width:2000px;text-align:center;top:660.5px;font-size:22px;color:#1d4ed8;font-weight:bold;font-family:'Liberation Sans', sans-serif;">Normal</div>
<div class="t" style="left:1317.8px;top:657.3px;font-size:26.2px;color:#111827;font-weight:normal;font-family:'Liberation Sans', sans-serif;">asdsda</div>
<div class="a" style="left:1752.3px;top:625.2px;width:360.1px;height:91.0px;overflow:hidden;">
<div class="t" style="left:15.5px;top:16.9px;font-size:26px;color:#111827;font-weight:normal;font-family:'Liberation Sans', sans-serif;-webkit-text-stroke:0.3px #111827;">ertan 3</div>
<div class="t" style="left:15.5px;top:53.8px;font-size:22.6px;color:#6b7280;font-weight:normal;font-family:'Liberation Sans', sans-serif;">Cari - CRM00003</div>
</div>
<div class="t" style="left:2127.7px;top:642.9px;font-size:25.5px;color:#111827;font-weight:normal;font-family:'Liberation Sans', sans-serif;">ARIZA</div>
<div class="t" style="left:2127.7px;top:680.3px;font-size:21.5px;color:#6b7280;font-weight:normal;font-family:'Liberation Sans', sans-serif;">FLEX ARIZASI</div>
<div class="t" style="left:1526.5px;width:2000px;text-align:center;top:657.7px;font-size:25.8px;color:#111827;font-weight:normal;font-family:'Liberation Sans', sans-serif;">Telefon</div>
<div class="t" style="left:2632.0px;top:642.5px;font-size:26px;color:#111827;font-weight:normal;font-family:'Liberation Sans', sans-serif;-webkit-text-stroke:0.3px #111827;">Admin Niora</div>
<div class="t" style="left:2632.0px;top:679.9px;font-size:22px;color:#6b7280;font-weight:normal;font-family:'Liberation Sans', sans-serif;">Kullanıcı</div>
<div class="a" style="left:2886px;top:625.2px;width:71.4px;height:91.0px;overflow:hidden;">
<div class="t" style="left:31.5px;top:32.7px;font-size:25.5px;color:#111827;font-weight:normal;font-family:'Liberation Sans', sans-serif;">04.01.2026</div>
</div>
<div class="a" style="left:476px;top:715.6600000000001px;width:2481.4px;height:1px;background:#e5e7eb;"></div>
<div class="a" style="left:540px;top:740.1500000000001px;width:50px;height:43px;background:#3b82f6;border-radius:6px;"></div>
<svg class="a" style="left:553px;top:747.45px;" width="25" height="25" viewBox="0 0 25 25"><path d="M9.5 4.5 H5 A2.5 2.5 0 0 0 2.5 7 V20 A2.5 2.5 0 0 0 5 22.5 H18 A2.5 2.5 0 0 0 20.5 20 V15.5" fill="none" stroke="#fff" stroke-width="3"/><path d="M10 15 L21 4" stroke="#fff" stroke-width="3" stroke-linecap="round"/><path d="M14 2 H23 V11 z" fill="#fff"/></svg>
<div class="a" style="left:669px;top:740.1500000000001px;width:209px;height:43px;background:#eff6ff;border-radius:8px;"></div>
<div class="t" style="left:684.0px;top:752.8px;font-size:23px;color:#2563eb;font-weight:bold;font-family:'Liberation Mono', monospace;">MT-2026-00003</div>
<div class="a" style="left:942.0px;top:741.6500000000001px;width:145px;height:40px;background:#ffedd5;border-radius:20px;"></div>
<div class="t" style="left:14.5px;width:2000px;text-align:center;top:751.5px;font-size:22px;color:#9a3412;font-weight:bold;font-family:'Liberation Sans', sans-serif;">Beklemede</div>
<div class="a" style="left:1161px;top:741.6500000000001px;width:104px;height:40px;background:#dbeafe;border-radius:7px;"></div>
<div class="t" style="left:213.0px;width:2000px;text-align:center;top:751.5px;font-size:22px;color:#1d4ed8;font-weight:bold;font-family:'Liberation Sans', sans-serif;">Normal</div>
<div class="t" style="left:1317.8px;top:748.3px;font-size:26.2px;color:#111827;font-weight:normal;font-family:'Liberation Sans', sans-serif;">Müşteri talebi 1</div>
<div class="a" style="left:1752.3px;top:716.2px;width:360.1px;height:91.0px;overflow:hidden;">
<div class="t" style="left:15.5px;top:16.9px;font-size:26px;color:#111827;font-weight:normal;font-family:'Liberation Sans', sans-serif;-webkit-text-stroke:0.3px #111827;">ertan 3</div>
<div class="t" style="left:15.5px;top:53.8px;font-size:22.6px;color:#6b7280;font-weight:normal;font-family:'Liberation Sans', sans-serif;">Cari - CRM00003</div>
</div>
<div class="t" style="left:2127.7px;top:733.9px;font-size:25.5px;color:#111827;font-weight:normal;font-family:'Liberation Sans', sans-serif;">ARIZA</div>
<div class="t" style="left:2127.7px;top:771.3px;font-size:21.5px;color:#6b7280;font-weight:normal;font-family:'Liberation Sans', sans-serif;">FLEX ARIZASI</div>
<div class="t" style="left:1526.5px;width:2000px;text-align:center;top:748.6px;font-size:25.8px;color:#111827;font-weight:normal;font-family:'Liberation Sans', sans-serif;">Telefon</div>
<div class="t" style="left:2632.0px;top:751.9px;font-size:22px;color:#6b7280;font-weight:normal;font-family:'Liberation Sans', sans-serif;">Kullanıcı</div>
<div class="a" style="left:2886px;top:716.2px;width:71.4px;height:91.0px;overflow:hidden;">
<div class="t" style="left:31.5px;top:32.7px;font-size:25.5px;color:#111827;font-weight:normal;font-family:'Liberation Sans', sans-serif;">03.01.2026</div>
</div>
<div class="a" style="left:476px;top:807.1400000000001px;width:2481.4px;height:90.98px;background:#f4f4f5;"></div>
<div class="a" style="left:476px;top:806.6400000000001px;width:2481.4px;height:1px;background:#e5e7eb;"></div>
<div class="a" style="left:540px;top:831.1300000000001px;width:50px;height:43px;background:#3b82f6;border-radius:6px;"></div>
<svg class="a" style="left:553px;top:838.4300000000001px;" width="25" height="25" viewBox="0 0 25 25"><path d="M9.5 4.5 H5 A2.5 2.5 0 0 0 2.5 7 V20 A2.5 2.5 0 0 0 5 22.5 H18 A2.5 2.5 0 0 0 20.5 20 V15.5" fill="none" stroke="#fff" stroke-width="3"/><path d="M10 15 L21 4" stroke="#fff" stroke-width="3" stroke-linecap="round"/><path d="M14 2 H23 V11 z" fill="#fff"/></svg>
<div class="a" style="left:669px;top:831.1300000000001px;width:209px;height:43px;background:#eff6ff;border-radius:8px;"></div>
<div class="t" style="left:684.0px;top:843.8px;font-size:23px;color:#2563eb;font-weight:bold;font-family:'Liberation Mono', monospace;">MT-2026-00002</div>
<div class="a" style="left:942.0px;top:832.6300000000001px;width:145px;height:40px;background:#ffedd5;border-radius:20px;"></div>
<div class="t" style="left:14.5px;width:2000px;text-align:center;top:842.4px;font-size:22px;color:#9a3412;font-weight:bold;font-family:'Liberation Sans', sans-serif;">Beklemede</div>
<div class="a" style="left:1161px;top:832.6300000000001px;width:104px;height:40px;background:#dbeafe;border-radius:7px;"></div>
<div class="t" style="left:213.0px;width:2000px;text-align:center;top:842.4px;font-size:22px;color:#1d4ed8;font-weight:bold;font-family:'Liberation Sans', sans-serif;">Normal</div>
<div class="t" style="left:1317.8px;top:839.3px;font-size:26.2px;color:#111827;font-weight:normal;font-family:'Liberation Sans', sans-serif;">asdads</div>
<div class="a" style="left:1752.3px;top:807.1px;width:360.1px;height:91.0px;overflow:hidden;">
<div class="t" style="left:15.5px;top:16.9px;font-size:26px;color:#111827;font-weight:normal;font-family:'Liberation Sans', sans-serif;-webkit-text-stroke:0.3px #111827;">ABDULLAH KOPAL (AR-GE MÜHENDİSLİK)</div>
<div class="t" style="left:15.5px;top:53.8px;font-size:22.6px;color:#6b7280;font-weight:normal;font-family:'Liberation Sans', sans-serif;">Cari - 320.01.034.A001</div>
</div>
<div class="t" style="left:2127.7px;top:824.9px;font-size:25.5px;color:#111827;font-weight:normal;font-family:'Liberation Sans', sans-serif;">ARIZA</div>
<div class="t" style="left:2127.7px;top:862.3px;font-size:21.5px;color:#6b7280;font-weight:normal;font-family:'Liberation Sans', sans-serif;">VANA ARIZASI</div>
<div class="t" style="left:1526.5px;width:2000px;text-align:center;top:839.6px;font-size:25.8px;color:#111827;font-weight:normal;font-family:'Liberation Sans', sans-serif;">Telefon</div>
<div class="t" style="left:2632.0px;top:824.4px;font-size:26px;color:#111827;font-weight:normal;font-family:'Liberation Sans', sans-serif;-webkit-text-stroke:0.3px #111827;">Admin Niora</div>
<div class="t" style="left:2632.0px;top:861.8px;font-size:22px;color:#6b7280;font-weight:normal;font-family:'Liberation Sans', sans-serif;">Kullanıcı</div>
<div class="a" style="left:2886px;top:807.1px;width:71.4px;height:91.0px;overflow:hidden;">
<div class="t" style="left:36.5px;top:32.7px;font-size:25.5px;color:#111827;font-weight:normal;font-family:'Liberation Sans', sans-serif;">19.01.2026</div>
</div>
<div class="a" style="left:476px;top:897.6200000000001px;width:2481.4px;height:1px;background:#e5e7eb;"></div>
<div class="a" style="left:540px;top:922.1100000000001px;width:50px;height:43px;background:#3b82f6;border-radius:6px;"></div>
<svg class="a" style="left:553px;top:929.4100000000001px;" width="25" height="25" viewBox="0 0 25 25"><path d="M9.5 4.5 H5 A2.5 2.5 0 0 0 2.5 7 V20 A2.5 2.5 0 0 0 5 22.5 H18 A2.5 2.5 0 0 0 20.5 20 V15.5" fill="none" stroke="#fff" stroke-width="3"/><path d="M10 15 L21 4" stroke="#fff" stroke-width="3" stroke-linecap="round"/><path d="M14 2 H23 V11 z" fill="#fff"/></svg>
<div class="a" style="left:669px;top:922.1100000000001px;width:209px;height:43px;background:#eff6ff;border-radius:8px;"></div>
<div class="t" style="left:684.0px;top:934.8px;font-size:23px;color:#2563eb;font-weight:bold;font-family:'Liberation Mono', monospace;">MT-2026-00001</div>
<div class="a" style="left:977.0px;top:923.6100000000001px;width:75px;height:40px;background:#dbeafe;border-radius:20px;"></div>
<div class="t" style="left:14.5px;width:2000px;text-align:center;top:933.4px;font-size:22px;color:#1e40af;font-weight:bold;font-family:'Liberation Sans', sans-serif;">Açık</div>
<div class="a" style="left:1161px;top:923.6100000000001px;width:104px;height:40px;background:#ffedd5;border-radius:7px;"></div>
<div class="t" style="left:213.0px;width:2000px;text-align:center;top:933.4px;font-size:22px;color:#c2410c;font-weight:bold;font-family:'Liberation Sans', sans-serif;">Yüksek</div>
<div class="t" style="left:1317.8px;top:930.3px;font-size:26.2px;color:#111827;font-weight:normal;font-family:'Liberation Sans', sans-serif;">asdas</div>
<div class="a" style="left:1752.3px;top:898.1px;width:360.1px;height:91.0px;overflow:hidden;">
<div class="t" style="left:15.5px;top:16.9px;font-size:26px;color:#111827;font-weight:normal;font-family:'Liberation Sans', sans-serif;-webkit-text-stroke:0.3px #111827;">ACKURAT</div>
<div class="t" style="left:15.5px;top:53.8px;font-size:22.6px;color:#6b7280;font-weight:normal;font-family:'Liberation Sans', sans-serif;">Cari - 320.01.041.M011</div>
</div>
<div class="t" style="left:2127.7px;top:915.8px;font-size:25.5px;color:#111827;font-weight:normal;font-family:'Liberation Sans', sans-serif;">ARIZA</div>
<div class="t" style="left:2127.7px;top:953.2px;font-size:21.5px;color:#6b7280;font-weight:normal;font-family:'Liberation Sans', sans-serif;">FLEX ARIZASI</div>
<div class="t" style="left:1526.5px;width:2000px;text-align:center;top:930.6px;font-size:25.8px;color:#111827;font-weight:normal;font-family:'Liberation Sans', sans-serif;">Telefon</div>
<div class="t" style="left:2632.0px;top:915.4px;font-size:26px;color:#111827;font-weight:normal;font-family:'Liberation Sans', sans-serif;-webkit-text-stroke:0.3px #111827;">Muhasebe Grubu</div>
<div class="t" style="left:2632.0px;top:952.8px;font-size:22px;color:#6b7280;font-weight:normal;font-family:'Liberation Sans', sans-serif;">Çalışma Grubu</div>
<div class="a" style="left:2886px;top:898.1px;width:71.4px;height:91.0px;overflow:hidden;">
<div class="t" style="left:36.5px;top:32.7px;font-size:25.5px;color:#111827;font-weight:normal;font-family:'Liberation Sans', sans-serif;">19.01.2026</div>
</div>
<div class="a" style="left:476px;top:989.1000000000001px;width:2481.4px;height:90.98px;background:#f4f4f5;"></div>
<div class="a" style="left:476px;top:988.6000000000001px;width:2481.4px;height:1px;background:#e5e7eb;"></div>
<div class="a" style="left:540px;top:1013.0900000000001px;width:50px;height:43px;background:#3b82f6;border-radius:6px;"></div>
<svg class="a" style="left:553px;top:1020.3900000000001px;" width="25" height="25" viewBox="0 0 25 25"><path d="M9.5 4.5 H5 A2.5 2.5 0 0 0 2.5 7 V20 A2.5 2.5 0 0 0 5 22.5 H18 A2.5 2.5 0 0 0 20.5 20 V15.5" fill="none" stroke="#fff" stroke-width="3"/><path d="M10 15 L21 4" stroke="#fff" stroke-width="3" stroke-linecap="round"/><path d="M14 2 H23 V11 z" fill="#fff"/></svg>
<div class="a" style="left:669px;top:1013.0900000000001px;width:209px;height:43px;background:#eff6ff;border-radius:8px;"></div>
<div class="t" style="left:684.0px;top:1025.8px;font-size:23px;color:#2563eb;font-weight:bold;font-family:'Liberation Mono', monospace;">MT-2025-00007</div>
<div class="a" style="left:928.0px;top:1014.5900000000001px;width:173px;height:40px;background:#fef9c3;border-radius:20px;"></div>
<div class="t" style="left:14.5px;width:2000px;text-align:center;top:1024.4px;font-size:22px;color:#854d0e;font-weight:bold;font-family:'Liberation Sans', sans-serif;">Devam Ediyor</div>
<div class="a" style="left:1161px;top:1014.5900000000001px;width:104px;height:40px;background:#dbeafe;border-radius:7px;"></div>
<div class="t" style="left:213.0px;width:2000px;text-align:center;top:1024.4px;font-size:22px;color:#1d4ed8;font-weight:bold;font-family:'Liberation Sans', sans-serif;">Normal</div>
<div class="t" style="left:1317.8px;top:1021.2px;font-size:26.2px;color:#111827;font-weight:normal;font-family:'Liberation Sans', sans-serif;">asddas</div>
<div class="a" style="left:1752.3px;top:989.1px;width:360.1px;height:91.0px;overflow:hidden;">
<div class="t" style="left:15.5px;top:16.9px;font-size:26px;color:#111827;font-weight:normal;font-family:'Liberation Sans', sans-serif;-webkit-text-stroke:0.3px #111827;">ADATEPE AHŞAP</div>
<div class="t" style="left:15.5px;top:53.8px;font-size:22.6px;color:#6b7280;font-weight:normal;font-family:'Liberation Sans', sans-serif;">Cari - 320.01.034.H001aa</div>
</div>
<div class="t" style="left:2127.7px;top:1006.8px;font-size:25.5px;color:#111827;font-weight:normal;font-family:'Liberation Sans', sans-serif;">ARIZA</div>
<div class="t" style="left:2127.7px;top:1044.2px;font-size:21.5px;color:#6b7280;font-weight:normal;font-family:'Liberation Sans', sans-serif;">FLEX ARIZASI</div>
<div class="t" style="left:1526.5px;width:2000px;text-align:center;top:1021.6px;font-size:25.8px;color:#111827;font-weight:normal;font-family:'Liberation Sans', sans-serif;">Telefon</div>
<div class="t" style="left:2632.0px;top:1006.4px;font-size:26px;color:#111827;font-weight:normal;font-family:'Liberation Sans', sans-serif;-webkit-text-stroke:0.3px #111827;">Ertan BOZKIR</div>
<div class="t" style="left:2632.0px;top:1043.8px;font-size:22px;color:#6b7280;font-weight:normal;font-family:'Liberation Sans', sans-serif;">Kullanıcı</div>
<div class="a" style="left:2886px;top:989.1px;width:71.4px;height:91.0px;overflow:hidden;">
<div class="t" style="left:38.5px;top:32.7px;font-size:25.5px;color:#111827;font-weight:normal;font-family:'Liberation Sans', sans-serif;">27.12.2025</div>
</div>
<div class="a" style="left:476px;top:1079.58px;width:2481.4px;height:1px;background:#e5e7eb;"></div>
<div class="a" style="left:540px;top:1104.07px;width:50px;height:43px;background:#3b82f6;border-radius:6px;"></div>
<svg class="a" style="left:553px;top:1111.37px;" width="25" height="25" viewBox="0 0 25 25"><path d="M9.5 4.5 H5 A2.5 2.5 0 0 0 2.5 7 V20 A2.5 2.5 0 0 0 5 22.5 H18 A2.5 2.5 0 0 0 20.5 20 V15.5" fill="none" stroke="#fff" stroke-width="3"/><path d="M10 15 L21 4" stroke="#fff" stroke-width="3" stroke-linecap="round"/><path d="M14 2 H23 V11 z" fill="#fff"/></svg>
<div class="a" style="left:669px;top:1104.07px;width:209px;height:43px;background:#eff6ff;border-radius:8px;"></div>
<div class="t" style="left:684.0px;top:1116.7px;font-size:23px;color:#2563eb;font-weight:bold;font-family:'Liberation Mono', monospace;">MT-2025-00005</div>
<div class="a" style="left:942.0px;top:1105.57px;width:145px;height:40px;background:#ffedd5;border-radius:20px;"></div>
<div class="t" style="left:14.5px;width:2000px;text-align:center;top:1115.4px;font-size:22px;color:#9a3412;font-weight:bold;font-family:'Liberation Sans', sans-serif;">Beklemede</div>
<div class="a" style="left:1161px;top:1105.57px;width:104px;height:40px;background:#dbeafe;border-radius:7px;"></div>
<div class="t" style="left:213.0px;width:2000px;text-align:center;top:1115.4px;font-size:22px;color:#1d4ed8;font-weight:bold;font-family:'Liberation Sans', sans-serif;">Normal</div>
<div class="t" style="left:1317.8px;top:1112.2px;font-size:26.2px;color:#111827;font-weight:normal;font-family:'Liberation Sans', sans-serif;">asdsda</div>
<div class="a" style="left:1752.3px;top:1080.1px;width:360.1px;height:91.0px;overflow:hidden;">
<div class="t" style="left:15.5px;top:16.9px;font-size:26px;color:#111827;font-weight:normal;font-family:'Liberation Sans', sans-serif;-webkit-text-stroke:0.3px #111827;">asdasd</div>
<div class="t" style="left:15.5px;top:53.8px;font-size:22.6px;color:#6b7280;font-weight:normal;font-family:'Liberation Sans', sans-serif;">Cari</div>
</div>
<div class="t" style="left:2127.7px;top:1097.8px;font-size:25.5px;color:#111827;font-weight:normal;font-family:'Liberation Sans', sans-serif;">ARIZA</div>
<div class="t" style="left:2127.7px;top:1135.2px;font-size:21.5px;color:#6b7280;font-weight:normal;font-family:'Liberation Sans', sans-serif;">FLEX ARIZASI</div>
<div class="t" style="left:1526.5px;width:2000px;text-align:center;top:1112.5px;font-size:25.8px;color:#111827;font-weight:normal;font-family:'Liberation Sans', sans-serif;">Telefon</div>
<div class="t" style="left:2632.0px;top:1097.4px;font-size:26px;color:#111827;font-weight:normal;font-family:'Liberation Sans', sans-serif;-webkit-text-stroke:0.3px #111827;">Admin Niora</div>
<div class="t" style="left:2632.0px;top:1134.8px;font-size:22px;color:#6b7280;font-weight:normal;font-family:'Liberation Sans', sans-serif;">Kullanıcı</div>
<div class="a" style="left:2886px;top:1080.1px;width:71.4px;height:91.0px;overflow:hidden;">
<div class="t" style="left:36.5px;top:32.7px;font-size:25.5px;color:#111827;font-weight:normal;font-family:'Liberation Sans', sans-serif;">18.12.2025</div>
</div>
<div class="a" style="left:476px;top:1171.06px;width:2481.4px;height:90.98px;background:#f4f4f5;"></div>
<div class="a" style="left:476px;top:1170.56px;width:2481.4px;height:1px;background:#e5e7eb;"></div>
<div class="a" style="left:540px;top:1195.05px;width:50px;height:43px;background:#3b82f6;border-radius:6px;"></div>
<svg class="a" style="left:553px;top:1202.35px;" width="25" height="25" viewBox="0 0 25 25"><path d="M9.5 4.5 H5 A2.5 2.5 0 0 0 2.5 7 V20 A2.5 2.5 0 0 0 5 22.5 H18 A2.5 2.5 0 0 0 20.5 20 V15.5" fill="none" stroke="#fff" stroke-width="3"/><path d="M10 15 L21 4" stroke="#fff" stroke-width="3" stroke-linecap="round"/><path d="M14 2 H23 V11 z" fill="#fff"/></svg>
<div class="a" style="left:669px;top:1195.05px;width:209px;height:43px;background:#eff6ff;border-radius:8px;"></div>
<div class="t" style="left:684.0px;top:1207.7px;font-size:23px;color:#2563eb;font-weight:bold;font-family:'Liberation Mono', monospace;">MT-2025-00006</div>
<div class="a" style="left:977.0px;top:1196.55px;width:75px;height:40px;background:#dbeafe;border-radius:20px;"></div>
<div class="t" style="left:14.5px;width:2000px;text-align:center;top:1206.4px;font-size:22px;color:#1e40af;font-weight:bold;font-family:'Liberation Sans', sans-serif;">Açık</div>
<div class="a" style="left:1161px;top:1196.55px;width:104px;height:40px;background:#dbeafe;border-radius:7px;"></div>
<div class="t" style="left:213.0px;width:2000px;text-align:center;top:1206.4px;font-size:22px;color:#1d4ed8;font-weight:bold;font-family:'Liberation Sans', sans-serif;">Normal</div>
<div class="t" style="left:1317.8px;top:1203.2px;font-size:26.2px;color:#111827;font-weight:normal;font-family:'Liberation Sans', sans-serif;">mhgv</div>
<div class="a" style="left:1752.3px;top:1171.1px;width:360.1px;height:91.0px;overflow:hidden;">
<div class="t" style="left:15.5px;top:16.9px;font-size:26px;color:#111827;font-weight:normal;font-family:'Liberation Sans', sans-serif;-webkit-text-stroke:0.3px #111827;">hgvmhgvb</div>
<div class="t" style="left:15.5px;top:53.8px;font-size:22.6px;color:#6b7280;font-weight:normal;font-family:'Liberation Sans', sans-serif;">Cari</div>
</div>
<div class="t" style="left:2127.7px;top:1188.8px;font-size:25.5px;color:#111827;font-weight:normal;font-family:'Liberation Sans', sans-serif;">ÖNERİ</div>
<div class="t" style="left:2127.7px;top:1226.2px;font-size:21.5px;color:#6b7280;font-weight:normal;font-family:'Liberation Sans', sans-serif;">ÜRÜN İYİLEŞTİRME</div>
<div class="t" style="left:1526.5px;width:2000px;text-align:center;top:1203.5px;font-size:25.8px;color:#111827;font-weight:normal;font-family:'Liberation Sans', sans-serif;">Telefon</div>
<div class="t" style="left:2632.0px;top:1188.4px;font-size:26px;color:#111827;font-weight:normal;font-family:'Liberation Sans', sans-serif;-webkit-text-stroke:0.3px #111827;">Admin Niora</div>
<div class="t" style="left:2632.0px;top:1225.8px;font-size:22px;color:#6b7280;font-weight:normal;font-family:'Liberation Sans', sans-serif;">Kullanıcı</div>
<div class="a" style="left:2886px;top:1171.1px;width:71.4px;height:91.0px;overflow:hidden;">
<div class="t" style="left:34.5px;top:32.7px;font-size:25.5px;color:#111827;font-weight:normal;font-family:'Liberation Sans', sans-serif;">08.12.2025</div>
</div>
<div class="a" style="left:476px;top:1261.54px;width:2481.4px;height:1px;background:#e5e7eb;"></div>
<div class="a" style="left:540px;top:1286.03px;width:50px;height:43px;background:#3b82f6;border-radius:6px;"></div>
<svg class="a" style="left:553px;top:1293.33px;" width="25" height="25" viewBox="0 0 25 25"><path d="M9.5 4.5 H5 A2.5 2.5 0 0 0 2.5 7 V20 A2.5 2.5 0 0 0 5 22.5 H18 A2.5 2.5 0 0 0 20.5 20 V15.5" fill="none" stroke="#fff" stroke-width="3"/><path d="M10 15 L21 4" stroke="#fff" stroke-width="3" stroke-linecap="round"/><path d="M14 2 H23 V11 z" fill="#fff"/></svg>
<div class="a" style="left:669px;top:1286.03px;width:209px;height:43px;background:#eff6ff;border-radius:8px;"></div>
<div class="t" style="left:684.0px;top:1298.7px;font-size:23px;color:#2563eb;font-weight:bold;font-family:'Liberation Mono', monospace;">MT-2025-00002</div>
<div class="a" style="left:977.0px;top:1287.53px;width:75px;height:40px;background:#dbeafe;border-radius:20px;"></div>
<div class="t" style="left:14.5px;width:2000px;text-align:center;top:1297.3px;font-size:22px;color:#1e40af;font-weight:bold;font-family:'Liberation Sans', sans-serif;">Açık</div>
<div class="a" style="left:1161px;top:1287.53px;width:104px;height:40px;background:#dbeafe;border-radius:7px;"></div>
<div class="t" style="left:213.0px;width:2000px;text-align:center;top:1297.3px;font-size:22px;color:#1d4ed8;font-weight:bold;font-family:'Liberation Sans', sans-serif;">Normal</div>
<div class="t" style="left:1317.8px;top:1294.2px;font-size:26.2px;color:#111827;font-weight:normal;font-family:'Liberation Sans', sans-serif;">talep2</div>
<div class="a" style="left:1752.3px;top:1262.0px;width:360.1px;height:91.0px;overflow:hidden;">
<div class="t" style="left:15.5px;top:16.9px;font-size:26px;color:#111827;font-weight:normal;font-family:'Liberation Sans', sans-serif;-webkit-text-stroke:0.3px #111827;">müşteri1</div>
<div class="t" style="left:15.5px;top:53.8px;font-size:22.6px;color:#6b7280;font-weight:normal;font-family:'Liberation Sans', sans-serif;">Cari - 123</div>
</div>
<div class="t" style="left:2127.7px;top:1294.8px;font-size:25.5px;color:#111827;font-weight:normal;font-family:'Liberation Sans', sans-serif;">ARIZA</div>
<div class="t" style="left:1526.5px;width:2000px;text-align:center;top:1294.5px;font-size:25.8px;color:#111827;font-weight:normal;font-family:'Liberation Sans', sans-serif;">Telefon</div>
<div class="t" style="left:2632.0px;top:1279.3px;font-size:26px;color:#111827;font-weight:normal;font-family:'Liberation Sans', sans-serif;-webkit-text-stroke:0.3px #111827;">asd asddd</div>
<div class="t" style="left:2632.0px;top:1316.7px;font-size:22px;color:#6b7280;font-weight:normal;font-family:'Liberation Sans', sans-serif;">Kullanıcı</div>
<div class="a" style="left:2886px;top:1262.0px;width:71.4px;height:91.0px;overflow:hidden;">
<div class="t" style="left:37.8px;top:32.7px;font-size:25.5px;color:#111827;font-weight:normal;font-family:'Liberation Sans', sans-serif;">30.11.2025</div>
</div>
<div class="a" style="left:476px;top:1353.02px;width:2481.4px;height:90.98px;background:#f4f4f5;"></div>
<div class="a" style="left:476px;top:1352.52px;width:2481.4px;height:1px;background:#e5e7eb;"></div>
<div class="a" style="left:540px;top:1377.01px;width:50px;height:43px;background:#3b82f6;border-radius:6px;"></div>
<svg class="a" style="left:553px;top:1384.31px;" width="25" height="25" viewBox="0 0 25 25"><path d="M9.5 4.5 H5 A2.5 2.5 0 0 0 2.5 7 V20 A2.5 2.5 0 0 0 5 22.5 H18 A2.5 2.5 0 0 0 20.5 20 V15.5" fill="none" stroke="#fff" stroke-width="3"/><path d="M10 15 L21 4" stroke="#fff" stroke-width="3" stroke-linecap="round"/><path d="M14 2 H23 V11 z" fill="#fff"/></svg>
<div class="a" style="left:669px;top:1377.01px;width:209px;height:43px;background:#eff6ff;border-radius:8px;"></div>
<div class="t" style="left:684.0px;top:1389.7px;font-size:23px;color:#2563eb;font-weight:bold;font-family:'Liberation Mono', monospace;">MT-2025-00004</div>
<div class="a" style="left:928.0px;top:1378.51px;width:173px;height:40px;background:#fef9c3;border-radius:20px;"></div>
<div class="t" style="left:14.5px;width:2000px;text-align:center;top:1388.3px;font-size:22px;color:#854d0e;font-weight:bold;font-family:'Liberation Sans', sans-serif;">Devam Ediyor</div>
<div class="a" style="left:1161px;top:1378.51px;width:104px;height:40px;background:#dbeafe;border-radius:7px;"></div>
<div class="t" style="left:213.0px;width:2000px;text-align:center;top:1388.3px;font-size:22px;color:#1d4ed8;font-weight:bold;font-family:'Liberation Sans', sans-serif;">Normal</div>
<div class="t" style="left:1317.8px;top:1385.2px;font-size:26.2px;color:#111827;font-weight:normal;font-family:'Liberation Sans', sans-serif;">talep4</div>
<div class="a" style="left:1752.3px;top:1353.0px;width:360.1px;height:91.0px;overflow:hidden;">
<div class="t" style="left:15.5px;top:16.9px;font-size:26px;color:#111827;font-weight:normal;font-family:'Liberation Sans', sans-serif;-webkit-text-stroke:0.3px #111827;">asd</div>
<div class="t" style="left:15.5px;top:53.8px;font-size:22.6px;color:#6b7280;font-weight:normal;font-family:'Liberation Sans', sans-serif;">Cari</div>
</div>
<div class="t" style="left:2127.7px;top:1385.7px;font-size:25.5px;color:#111827;font-weight:normal;font-family:'Liberation Sans', sans-serif;">ÖNERİ</div>
<div class="t" style="left:1526.5px;width:2000px;text-align:center;top:1385.5px;font-size:25.8px;color:#111827;font-weight:normal;font-family:'Liberation Sans', sans-serif;">Telefon</div>
<div class="t" style="left:2632.0px;top:1370.3px;font-size:26px;color:#111827;font-weight:normal;font-family:'Liberation Sans', sans-serif;-webkit-text-stroke:0.3px #111827;">Admin Niora</div>
<div class="t" style="left:2632.0px;top:1407.7px;font-size:22px;color:#6b7280;font-weight:normal;font-family:'Liberation Sans', sans-serif;">Kullanıcı</div>
<div class="a" style="left:2886px;top:1353.0px;width:71.4px;height:91.0px;overflow:hidden;">
<div class="t" style="left:37.8px;top:32.7px;font-size:25.5px;color:#111827;font-weight:normal;font-family:'Liberation Sans', sans-serif;">30.11.2025</div>
</div>
<div class="a" style="left:476px;top:1443.5px;width:2481.4px;height:1px;background:#e5e7eb;"></div>
<div class="a" style="left:540px;top:1467.99px;width:50px;height:43px;background:#3b82f6;border-radius:6px;"></div>
<svg class="a" style="left:553px;top:1475.29px;" width="25" height="25" viewBox="0 0 25 25"><path d="M9.5 4.5 H5 A2.5 2.5 0 0 0 2.5 7 V20 A2.5 2.5 0 0 0 5 22.5 H18 A2.5 2.5 0 0 0 20.5 20 V15.5" fill="none" stroke="#fff" stroke-width="3"/><path d="M10 15 L21 4" stroke="#fff" stroke-width="3" stroke-linecap="round"/><path d="M14 2 H23 V11 z" fill="#fff"/></svg>
<div class="a" style="left:669px;top:1467.99px;width:209px;height:43px;background:#eff6ff;border-radius:8px;"></div>
<div class="t" style="left:684.0px;top:1480.7px;font-size:23px;color:#2563eb;font-weight:bold;font-family:'Liberation Mono', monospace;">MT-2025-00001</div>
<div class="a" style="left:977.0px;top:1469.49px;width:75px;height:40px;background:#dbeafe;border-radius:20px;"></div>
<div class="t" style="left:14.5px;width:2000px;text-align:center;top:1479.3px;font-size:22px;color:#1e40af;font-weight:bold;font-family:'Liberation Sans', sans-serif;">Açık</div>
<div class="a" style="left:1161px;top:1469.49px;width:104px;height:40px;background:#dbeafe;border-radius:7px;"></div>
<div class="t" style="left:213.0px;width:2000px;text-align:center;top:1479.3px;font-size:22px;color:#1d4ed8;font-weight:bold;font-family:'Liberation Sans', sans-serif;">Normal</div>
<div class="t" style="left:1317.8px;top:1476.1px;font-size:26.2px;color:#111827;font-weight:normal;font-family:'Liberation Sans', sans-serif;">Talep başlığı1</div>
<div class="a" style="left:1752.3px;top:1444.0px;width:360.1px;height:91.0px;overflow:hidden;">
<div class="t" style="left:15.5px;top:16.9px;font-size:26px;color:#111827;font-weight:normal;font-family:'Liberation Sans', sans-serif;-webkit-text-stroke:0.3px #111827;">ahmet</div>
<div class="t" style="left:15.5px;top:53.8px;font-size:22.6px;color:#6b7280;font-weight:normal;font-family:'Liberation Sans', sans-serif;">Cari - 123123</div>
</div>
<div class="t" style="left:2127.7px;top:1476.7px;font-size:25.5px;color:#111827;font-weight:normal;font-family:'Liberation Sans', sans-serif;">ARIZA</div>
<div class="t" style="left:1526.5px;width:2000px;text-align:center;top:1476.5px;font-size:25.8px;color:#111827;font-weight:normal;font-family:'Liberation Sans', sans-serif;">Telefon</div>
<div class="t" style="left:2632.0px;top:1461.3px;font-size:26px;color:#111827;font-weight:normal;font-family:'Liberation Sans', sans-serif;-webkit-text-stroke:0.3px #111827;">Ertan BOZKIR</div>
<div class="t" style="left:2632.0px;top:1498.7px;font-size:22px;color:#6b7280;font-weight:normal;font-family:'Liberation Sans', sans-serif;">Kullanıcı</div>
<div class="a" style="left:2886px;top:1444.0px;width:71.4px;height:91.0px;overflow:hidden;">
<div class="t" style="left:39.9px;top:32.7px;font-size:25.5px;color:#111827;font-weight:normal;font-family:'Liberation Sans', sans-serif;">27.11.2025</div>
</div>
<div class="a" style="left:476px;top:1534.98px;width:2481.4px;height:90.98px;background:#f4f4f5;"></div>
<div class="a" style="left:476px;top:1534.48px;width:2481.4px;height:1px;background:#e5e7eb;"></div>
<div class="a" style="left:540px;top:1558.97px;width:50px;height:43px;background:#3b82f6;border-radius:6px;"></div>
<svg class="a" style="left:553px;top:1566.27px;" width="25" height="25" viewBox="0 0 25 25"><path d="M9.5 4.5 H5 A2.5 2.5 0 0 0 2.5 7 V20 A2.5 2.5 0 0 0 5 22.5 H18 A2.5 2.5 0 0 0 20.5 20 V15.5" fill="none" stroke="#fff" stroke-width="3"/><path d="M10 15 L21 4" stroke="#fff" stroke-width="3" stroke-linecap="round"/><path d="M14 2 H23 V11 z" fill="#fff"/></svg>
<div class="a" style="left:669px;top:1558.97px;width:209px;height:43px;background:#eff6ff;border-radius:8px;"></div>
<div class="t" style="left:684.0px;top:1571.6px;font-size:23px;color:#2563eb;font-weight:bold;font-family:'Liberation Mono', monospace;">MT-2025-00003</div>
<div class="a" style="left:977.0px;top:1560.47px;width:75px;height:40px;background:#dbeafe;border-radius:20px;"></div>
<div class="t" style="left:14.5px;width:2000px;text-align:center;top:1570.3px;font-size:22px;color:#1e40af;font-weight:bold;font-family:'Liberation Sans', sans-serif;">Açık</div>
<div class="a" style="left:1161px;top:1560.47px;width:104px;height:40px;background:#dbeafe;border-radius:7px;"></div>
<div class="t" style="left:213.0px;width:2000px;text-align:center;top:1570.3px;font-size:22px;color:#1d4ed8;font-weight:bold;font-family:'Liberation Sans', sans-serif;">Normal</div>
<div class="t" style="left:1317.8px;top:1567.1px;font-size:26.2px;color:#111827;font-weight:normal;font-family:'Liberation Sans', sans-serif;">talep3</div>
<div class="a" style="left:1752.3px;top:1535.0px;width:360.1px;height:91.0px;overflow:hidden;">
<div class="t" style="left:15.5px;top:16.9px;font-size:26px;color:#111827;font-weight:normal;font-family:'Liberation Sans', sans-serif;-webkit-text-stroke:0.3px #111827;">1asdsa</div>
<div class="t" style="left:15.5px;top:53.8px;font-size:22.6px;color:#6b7280;font-weight:normal;font-family:'Liberation Sans', sans-serif;">Cari</div>
</div>
<div class="t" style="left:2127.7px;top:1567.7px;font-size:25.5px;color:#111827;font-weight:normal;font-family:'Liberation Sans', sans-serif;">ARIZA</div>
<div class="t" style="left:1526.5px;width:2000px;text-align:center;top:1567.5px;font-size:25.8px;color:#111827;font-weight:normal;font-family:'Liberation Sans', sans-serif;">Telefon</div>
<div class="t" style="left:2632.0px;top:1552.3px;font-size:26px;color:#111827;font-weight:normal;font-family:'Liberation Sans', sans-serif;-webkit-text-stroke:0.3px #111827;">asd asddd</div>
<div class="t" style="left:2632.0px;top:1589.7px;font-size:22px;color:#6b7280;font-weight:normal;font-family:'Liberation Sans', sans-serif;">Kullanıcı</div>
<div class="a" style="left:2886px;top:1535.0px;width:71.4px;height:91.0px;overflow:hidden;">
<div class="t" style="left:39.9px;top:32.7px;font-size:25.5px;color:#111827;font-weight:normal;font-family:'Liberation Sans', sans-serif;">27.11.2025</div>
</div>
<div class="a" style="left:476px;top:1625.46px;width:2481.4px;height:1px;background:#e5e7eb;"></div>
<div class="a" style="left:476px;top:1716.44px;width:2481.4px;height:1px;background:#e5e7eb;"></div>
<div class="a" style="left:540px;top:1649.95px;width:50px;height:43px;background:#3b82f6;border-radius:6px;"></div>
<svg class="a" style="left:553px;top:1657.25px;" width="25" height="25" viewBox="0 0 25 25"><path d="M9.5 4.5 H5 A2.5 2.5 0 0 0 2.5 7 V20 A2.5 2.5 0 0 0 5 22.5 H18 A2.5 2.5 0 0 0 20.5 20 V15.5" fill="none" stroke="#fff" stroke-width="3"/><path d="M10 15 L21 4" stroke="#fff" stroke-width="3" stroke-linecap="round"/><path d="M14 2 H23 V11 z" fill="#fff"/></svg>
<div class="a" style="left:669px;top:1649.95px;width:209px;height:43px;background:#eff6ff;border-radius:8px;"></div>
<div class="t" style="left:684.0px;top:1662.6px;font-size:23px;color:#2563eb;font-weight:bold;font-family:'Liberation Mono', monospace;">MT-2026-00006</div>
<div class="a" style="left:928.0px;top:1651.45px;width:173px;height:40px;background:#fef9c3;border-radius:20px;"></div>
<div class="t" style="left:14.5px;width:2000px;text-align:center;top:1661.3px;font-size:22px;color:#854d0e;font-weight:bold;font-family:'Liberation Sans', sans-serif;">Devam Ediyor</div>
<div class="a" style="left:1161px;top:1651.45px;width:104px;height:40px;background:#dbeafe;border-radius:7px;"></div>
<div class="t" style="left:213.0px;width:2000px;text-align:center;top:1661.3px;font-size:22px;color:#1d4ed8;font-weight:bold;font-family:'Liberation Sans', sans-serif;">Normal</div>
<div class="t" style="left:1317.8px;top:1658.1px;font-size:26.2px;color:#111827;font-weight:normal;font-family:'Liberation Sans', sans-serif;">Müşteri Arıza Talebi</div>
<div class="a" style="left:1752.3px;top:1626.0px;width:360.1px;height:91.0px;overflow:hidden;">
<div class="t" style="left:15.5px;top:16.9px;font-size:26px;color:#111827;font-weight:normal;font-family:'Liberation Sans', sans-serif;-webkit-text-stroke:0.3px #111827;">Ertan müşteri 1</div>
<div class="t" style="left:15.5px;top:53.8px;font-size:22.6px;color:#6b7280;font-weight:normal;font-family:'Liberation Sans', sans-serif;">Cari - CRM00001</div>
</div>
<div class="t" style="left:2127.7px;top:1643.7px;font-size:25.5px;color:#111827;font-weight:normal;font-family:'Liberation Sans', sans-serif;">ARIZA</div>
<div class="t" style="left:2127.7px;top:1681.1px;font-size:21.5px;color:#6b7280;font-weight:normal;font-family:'Liberation Sans', sans-serif;">FLEX ARIZASI</div>
<div class="t" style="left:1526.5px;width:2000px;text-align:center;top:1658.4px;font-size:25.8px;color:#111827;font-weight:normal;font-family:'Liberation Sans', sans-serif;">Telefon</div>
<div class="t" style="left:2632.0px;top:1643.3px;font-size:26px;color:#111827;font-weight:normal;font-family:'Liberation Sans', sans-serif;-webkit-text-stroke:0.3px #111827;">Admin Niora</div>
<div class="t" style="left:2632.0px;top:1680.7px;font-size:22px;color:#6b7280;font-weight:normal;font-family:'Liberation Sans', sans-serif;">Kullanıcı</div>
<div class="a" style="left:2886px;top:1626.0px;width:71.4px;height:91.0px;overflow:hidden;">
<div class="t" style="left:31.6px;top:32.7px;font-size:25.5px;color:#111827;font-weight:normal;font-family:'Liberation Sans', sans-serif;">08.01.2026</div>
</div>
<div class="a" style="left:2957.4px;top:535px;width:29.6px;height:1414px;background:#fafafa;"></div>
<svg class="a" style="left:2962px;top:543px;" width="20" height="16" viewBox="0 0 20 16"><path d="M10 2.5 L17.5 13 H2.5z" fill="#8e8e8e" stroke="#8e8e8e" stroke-width="3" stroke-linejoin="round"/></svg>
<svg class="a" style="left:2962px;top:1933px;" width="20" height="16" viewBox="0 0 20 16"><path d="M10 13.5 L17.5 3 H2.5z" fill="#8e8e8e" stroke="#8e8e8e" stroke-width="3" stroke-linejoin="round"/></svg>
<div class="a" style="left:444px;top:108px;width:40px;height:1841px;background:linear-gradient(90deg,rgba(30,41,59,0.075),rgba(30,41,59,0.02) 45%,rgba(30,41,59,0));pointer-events:none;"></div>
<div class="a" style="left:444px;top:109px;width:2559px;height:10px;background:linear-gradient(180deg,rgba(30,41,59,0.045),rgba(30,41,59,0));pointer-events:none;"></div>
<div class="a" style="left:-6px;top:1943px;width:14px;height:14px;background:#222;border-radius:50%;"></div>
</body></html>
